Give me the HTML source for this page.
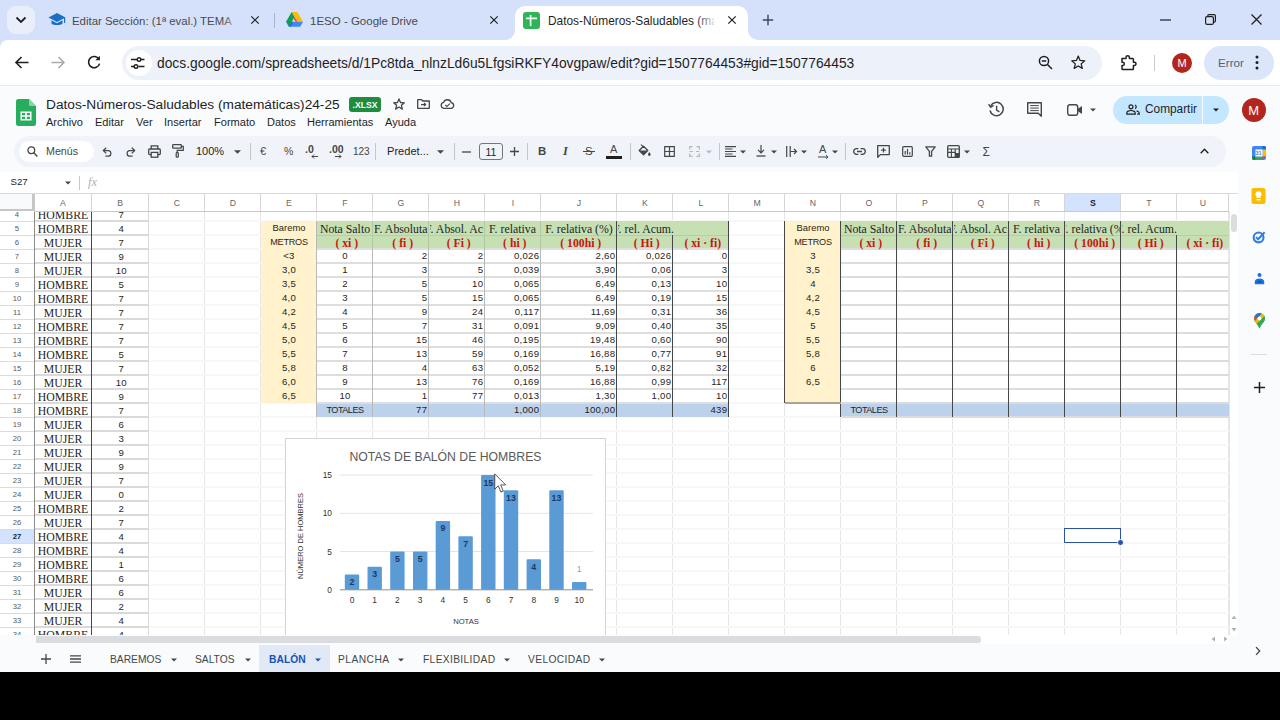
<!DOCTYPE html>
<html lang="es"><head><meta charset="utf-8"><title>Datos-Números-Saludables</title>
<style>
*{box-sizing:border-box;margin:0;padding:0}
html,body{width:1280px;height:720px;overflow:hidden;background:#000}
body{font-family:"Liberation Sans",sans-serif;position:relative;color:#1f1f1f}
.abs{position:absolute}
.t{position:absolute;white-space:nowrap;line-height:1}
svg{position:absolute;overflow:visible}
#tabstrip{left:0;top:0;width:1280px;height:52px;background:#d5e1fa}
#navbar{left:0;top:40px;width:1280px;height:46px;background:#fff;border-radius:8px 0 0 0}
#app{left:0;top:86px;width:1280px;height:586px;background:#f9fbfd}
.cell{position:absolute;white-space:nowrap;overflow:hidden;line-height:14px;height:14px}
.sans{font-family:"Liberation Sans",sans-serif}
.ser{font-family:"Liberation Serif",serif}
</style></head>
<body>
<div id="tabstrip" class="abs"></div>
<div class="abs" style="left:7px;top:6px;width:28px;height:28px;border-radius:9px;background:#e9eefb"></div>
<svg style="left:15px;top:16px" width="12" height="8" viewBox="0 0 12 8"><path d="M1.5 1.5 L6 6 L10.5 1.5" fill="none" stroke="#1f1f1f" stroke-width="1.8"/></svg>
<svg style="left:48px;top:12px" width="18" height="16" viewBox="0 0 18 16"><path d="M9 1 L0.5 5.5 L9 10 L17.5 5.5Z" fill="#1a6fc4"/><path d="M3.5 8.2 V11.6 C5 13.6 13 13.6 14.5 11.6 V8.2 L9 11.2Z" fill="#1a6fc4"/><path d="M16.6 6 V11" stroke="#1a6fc4" stroke-width="1.2"/></svg>
<div class="t" style="left:72px;top:16px;font-size:11.4px;color:#474a50;width:162px;overflow:hidden">Editar Sección: (1ª eval.) TEMA 5</div>
<div class="abs" style="left:222px;top:8px;width:18px;height:24px;background:linear-gradient(90deg,rgba(213,225,250,0),#d5e1fa)"></div>
<svg style="left:250px;top:15px" width="10" height="10" viewBox="0 0 10 10"><path d="M1.3 1.3 L8.7 8.7 M8.7 1.3 L1.3 8.7" stroke="#1f1f1f" stroke-width="1.2"/></svg>
<div class="abs" style="left:274px;top:13px;width:1px;height:15px;background:#a7b3cf"></div>
<svg style="left:286px;top:12px" width="17" height="15" viewBox="0 0 17 15"><path d="M5.7 0 H11.3 L17 9.8 H11.4Z" fill="#fbbc04"/><path d="M5.7 0 L0 9.8 L2.8 14.7 L8.5 4.9Z" fill="#0f9d58"/><path d="M5.6 9.8 H17 L14.2 14.7 H2.8Z" fill="#4285f4"/><path d="M5.6 9.8 L2.8 14.7 H4.5 L7.2 9.8Z" fill="#1967d2"/><path d="M11.4 9.8 L8.5 4.9 L7.6 6.4 L9.6 9.8Z" fill="#ea4335"/></svg>
<div class="t" style="left:310px;top:16px;font-size:11.5px;color:#474a50">1ESO - Google Drive</div>
<svg style="left:489px;top:15px" width="10" height="10" viewBox="0 0 10 10"><path d="M1.3 1.3 L8.7 8.7 M8.7 1.3 L1.3 8.7" stroke="#1f1f1f" stroke-width="1.2"/></svg>
<div class="abs" style="left:515px;top:6px;width:233px;height:34px;background:#fff;border-radius:10px 10px 0 0"></div>
<svg style="left:505px;top:30px" width="10" height="10" viewBox="0 0 10 10"><path d="M10 0 V10 H0 A10 10 0 0 0 10 0Z" fill="#fff"/></svg>
<svg style="left:748px;top:30px" width="10" height="10" viewBox="0 0 10 10"><path d="M0 0 V10 H10 A10 10 0 0 1 0 0Z" fill="#fff"/></svg>
<div class="abs" style="left:523px;top:12px;width:17px;height:17px;border-radius:3px;background:#2fb457"></div>
<svg style="left:526px;top:15px" width="11" height="11" viewBox="0 0 11 11"><path d="M4.6 0V11 M0 3.4H11" stroke="#fff" stroke-width="1.7" opacity="0.92"/></svg>
<div class="t" style="left:548px;top:16px;font-size:11.9px;color:#1f1f1f;width:166px;overflow:hidden">Datos-Números-Saludables (matem</div>
<div class="abs" style="left:696px;top:8px;width:22px;height:24px;background:linear-gradient(90deg,rgba(255,255,255,0),#fff)"></div>
<svg style="left:727px;top:15px" width="10" height="10" viewBox="0 0 10 10"><path d="M1.3 1.3 L8.7 8.7 M8.7 1.3 L1.3 8.7" stroke="#1f1f1f" stroke-width="1.2"/></svg>
<svg style="left:762px;top:14px" width="12" height="12" viewBox="0 0 12 12"><path d="M6 0.8V11.2 M0.8 6H11.2" stroke="#3c4657" stroke-width="1.4"/></svg>
<svg style="left:1160px;top:19px" width="11" height="2" viewBox="0 0 11 2"><path d="M0 1H11" stroke="#1f1f1f" stroke-width="1.2"/></svg>
<svg style="left:1205px;top:14px" width="11" height="11" viewBox="0 0 11 11"><rect x="0.6" y="2.6" width="7.8" height="7.8" rx="1.5" fill="none" stroke="#1f1f1f" stroke-width="1.2"/><path d="M2.8 2.4 V1.8 Q2.8 0.6 4 0.6 H9 Q10.4 0.6 10.4 2 V7 Q10.4 8.2 9.2 8.2 H8.6" fill="none" stroke="#1f1f1f" stroke-width="1.2"/></svg>
<svg style="left:1251px;top:14px" width="11" height="11" viewBox="0 0 11 11"><path d="M0.5 0.5 L10.5 10.5 M10.5 0.5 L0.5 10.5" stroke="#1f1f1f" stroke-width="1.3"/></svg>
<div id="navbar" class="abs"></div>
<div class="abs" style="left:0;top:85px;width:1280px;height:1px;background:#e6e9f0"></div>
<svg style="left:15px;top:56px" width="14" height="13" viewBox="0 0 14 13"><path d="M13.5 6.5 H1.5 M6.5 1 L1 6.5 L6.5 12" fill="none" stroke="#1f1f1f" stroke-width="1.6"/></svg>
<svg style="left:51px;top:56px" width="14" height="13" viewBox="0 0 14 13"><path d="M0.5 6.5 H12.5 M7.5 1 L13 6.5 L7.5 12" fill="none" stroke="#a9abae" stroke-width="1.6"/></svg>
<svg style="left:87px;top:55px" width="14" height="15" viewBox="0 0 14 15"><path d="M12 4.2 A5.6 5.6 0 1 0 12.6 8.6" fill="none" stroke="#1f1f1f" stroke-width="1.6"/><path d="M12.9 0.8 V5.3 H8.4Z" fill="#1f1f1f"/></svg>
<div class="abs" style="left:122px;top:46px;width:980px;height:34px;border-radius:17px;background:#edf1fa"></div>
<div class="abs" style="left:126px;top:50px;width:26px;height:26px;border-radius:13px;background:#fff"></div>
<svg style="left:131px;top:57px" width="15" height="12" viewBox="0 0 15 12"><path d="M0 2.5H6 M10 2.5H13.5 M0 9.5H3 M7.5 9.5H13.5" stroke="#1f1f1f" stroke-width="1.4"/><circle cx="8" cy="2.5" r="1.8" fill="none" stroke="#1f1f1f" stroke-width="1.4"/><circle cx="5" cy="9.5" r="1.8" fill="none" stroke="#1f1f1f" stroke-width="1.4"/></svg>
<div class="t" style="left:157px;top:56.5px;font-size:13.8px;color:#1f1f1f">docs.google.com/spreadsheets/d/1Pc8tda_nlnzLd6u5LfgsiRKFY4ovgpaw/edit?gid=1507764453#gid=1507764453</div>
<svg style="left:1038px;top:55px" width="15" height="15" viewBox="0 0 15 15"><circle cx="6" cy="6" r="4.6" fill="none" stroke="#1f1f1f" stroke-width="1.5"/><path d="M9.5 9.5 L14 14 M3.8 6 H8.2" stroke="#1f1f1f" stroke-width="1.5"/></svg>
<svg style="left:1071px;top:55px" width="14.5" height="14.5" viewBox="0 0 16 16"><path d="M8 1.2 L10 6 L15.2 6.4 L11.2 9.8 L12.5 14.8 L8 12.1 L3.5 14.8 L4.8 9.8 L0.8 6.4 L6 6Z" fill="none" stroke="#1f1f1f" stroke-width="1.4" stroke-linejoin="round"/></svg>
<svg style="left:1120px;top:54px" width="17" height="17" viewBox="0 0 17 17"><path d="M2 4.6 H6 V3.4 A1.7 1.7 0 0 1 9.4 3.4 V4.6 H12.6 A0.8 0.8 0 0 1 13.4 5.4 V8.2 H14.4 A1.6 1.6 0 0 1 14.4 11.4 H13.4 V14.8 A0.8 0.8 0 0 1 12.6 15.6 H2.8 A0.8 0.8 0 0 1 2 14.8 V11.6 H2.6 A1.7 1.7 0 0 0 2.6 8.2 H2Z" fill="none" stroke="#1f1f1f" stroke-width="1.5" stroke-linejoin="round"/></svg>
<div class="abs" style="left:1154px;top:55px;width:1px;height:16px;background:#c7cbd6"></div>
<div class="abs" style="left:1172px;top:53px;width:20px;height:20px;border-radius:10px;background:#b3261e"></div>
<div class="t" style="left:1172px;top:58px;width:20px;text-align:center;font-size:11px;color:#fff">M</div>
<div class="abs" style="left:1204px;top:46px;width:70px;height:34px;border-radius:17px;background:#dbe6fb"></div>
<div class="t" style="left:1218px;top:57px;font-size:11.7px;color:#55617a">Error</div>
<svg style="left:1255px;top:55px" width="4" height="15" viewBox="0 0 4 15"><circle cx="2" cy="2" r="1.5" fill="#1f1f1f"/><circle cx="2" cy="7.5" r="1.5" fill="#1f1f1f"/><circle cx="2" cy="13" r="1.5" fill="#1f1f1f"/></svg>
<div id="app" class="abs"></div>
<svg style="left:16px;top:99px" width="20" height="27" viewBox="0 0 20 27"><path d="M2.5 0 H13 L20 7 V24.5 A2.5 2.5 0 0 1 17.5 27 H2.5 A2.5 2.5 0 0 1 0 24.5 V2.5 A2.5 2.5 0 0 1 2.5 0Z" fill="#27ad5d"/><path d="M13 0 L20 7 H14.5 A1.5 1.5 0 0 1 13 5.5Z" fill="#8ed1b1"/><path d="M4.5 12.5H15.5V21.5H4.5Z M6 14V16.2H9.2V14Z M10.8 14V16.2H14V14Z M6 17.8V20H9.2V17.8Z M10.8 17.8V20H14V17.8Z" fill="#fff" fill-rule="evenodd"/></svg>
<div class="t" style="left:46px;top:98px;font-size:13.7px;color:#1f1f1f">Datos-Números-Saludables (matemáticas)24-25</div>
<div class="abs" style="left:349px;top:97px;width:32px;height:15px;border-radius:3px;background:#1e8e3e"></div>
<div class="t" style="left:349px;top:100.5px;width:32px;text-align:center;font-size:8.6px;font-weight:bold;color:#fff;letter-spacing:0">.XLSX</div>
<svg style="left:393px;top:98px" width="12" height="12" viewBox="0 0 16 16"><path d="M8 1.2 L10 6 L15.2 6.4 L11.2 9.8 L12.5 14.8 L8 12.1 L3.5 14.8 L4.8 9.8 L0.8 6.4 L6 6Z" fill="none" stroke="#444746" stroke-width="1.7" stroke-linejoin="round"/></svg>
<svg style="left:417px;top:99px" width="13" height="10" viewBox="0 0 13 10"><path d="M0.7 0.7 H4.6 L5.8 2 H12.3 V9.3 H0.7Z" fill="none" stroke="#444746" stroke-width="1.3" stroke-linejoin="round"/><path d="M4 5.6 H8.6 M7 4 L8.7 5.6 L7 7.2" fill="none" stroke="#444746" stroke-width="1.1"/></svg>
<svg style="left:440px;top:99px" width="15" height="10" viewBox="0 0 15 10"><path d="M3.8 9.3 A3 3 0 0 1 3.6 3.4 A4 4 0 0 1 11.2 3.6 A2.9 2.9 0 0 1 11.4 9.3Z" fill="none" stroke="#444746" stroke-width="1.3"/><path d="M5.3 6 L6.9 7.5 L9.8 4.6" fill="none" stroke="#444746" stroke-width="1.1"/></svg>
<div class="t" style="left:46px;top:116.5px;font-size:11.05px;color:#1f1f1f">Archivo</div>
<div class="t" style="left:95px;top:116.5px;font-size:11.05px;color:#1f1f1f">Editar</div>
<div class="t" style="left:136px;top:116.5px;font-size:11.05px;color:#1f1f1f">Ver</div>
<div class="t" style="left:164px;top:116.5px;font-size:11.05px;color:#1f1f1f">Insertar</div>
<div class="t" style="left:214px;top:116.5px;font-size:11.05px;color:#1f1f1f">Formato</div>
<div class="t" style="left:267px;top:116.5px;font-size:11.05px;color:#1f1f1f">Datos</div>
<div class="t" style="left:307px;top:116.5px;font-size:11.05px;color:#1f1f1f">Herramientas</div>
<div class="t" style="left:385px;top:116.5px;font-size:11.05px;color:#1f1f1f">Ayuda</div>
<svg style="left:988px;top:101px" width="17" height="17" viewBox="0 0 17 17"><path d="M2.6 5 A6.7 6.7 0 1 1 2 9.5" fill="none" stroke="#444746" stroke-width="1.5"/><path d="M0.6 3.2 L2.6 6.3 L5.6 4.4" fill="none" stroke="#444746" stroke-width="1.4"/><path d="M8.6 4.8 V9 L11.4 10.8" fill="none" stroke="#444746" stroke-width="1.4"/></svg>
<svg style="left:1027px;top:102px" width="15" height="15" viewBox="0 0 15 15"><path d="M0.7 0.7 H14.3 V14.3 L11.3 11.3 H0.7Z" fill="none" stroke="#444746" stroke-width="1.4" stroke-linejoin="round"/><path d="M3.2 3.6H11.8 M3.2 6.1H11.8 M3.2 8.6H11.8" stroke="#444746" stroke-width="1"/></svg>
<svg style="left:1067px;top:104px" width="16" height="12" viewBox="0 0 16 12"><rect x="0.7" y="0.7" width="10" height="10.6" rx="2.2" fill="none" stroke="#444746" stroke-width="1.4"/><path d="M10.7 5 L15 2 V10 L10.7 7Z" fill="#444746"/></svg>
<svg style="left:1090px;top:108px" width="6" height="4" viewBox="0 0 8 4"><path d="M0 0H8L4 4Z" fill="#444746"/></svg>
<div class="abs" style="left:1113px;top:95.5px;width:116px;height:28.5px;border-radius:14.5px;background:#c2e7ff"></div>
<div class="abs" style="left:1202px;top:95.5px;width:1px;height:28.5px;background:#f9fbfd"></div>
<svg style="left:1126px;top:104px" width="14" height="11" viewBox="0 0 14 11"><circle cx="5" cy="2.8" r="2" fill="none" stroke="#1f1f1f" stroke-width="1.2"/><path d="M0.8 10.2 V9 C0.8 7.4 3 6.5 5 6.5 S9.2 7.4 9.2 9 V10.2Z" fill="none" stroke="#1f1f1f" stroke-width="1.2"/><path d="M9 1 A2 2 0 0 1 9 4.7 M10.6 6.8 C12 7.2 13.2 7.9 13.2 9 V10.2 H11.2" fill="none" stroke="#1f1f1f" stroke-width="1.2"/></svg>
<div class="t" style="left:1145px;top:104px;font-size:11.85px;color:#1f1f1f">Compartir</div>
<svg style="left:1213px;top:108px" width="6" height="4" viewBox="0 0 8 4"><path d="M0 0H8L4 4Z" fill="#1f1f1f"/></svg>
<div class="abs" style="left:1241.5px;top:97.5px;width:24.5px;height:24.5px;border-radius:13px;background:#b3261e"></div>
<div class="t" style="left:1241.5px;top:103.5px;width:24.5px;text-align:center;font-size:13px;color:#fff">M</div>
<div class="abs" style="left:14px;top:136px;width:1212px;height:31px;border-radius:16px;background:#f0f3f9"></div>
<div class="abs" style="left:19px;top:141px;width:75px;height:21px;border-radius:11px;background:#fff"></div>
<svg style="left:27px;top:146px" width="11" height="11" viewBox="0 0 11 11"><circle cx="4.3" cy="4.3" r="3.4" fill="none" stroke="#444746" stroke-width="1.3"/><path d="M6.8 6.8 L10.4 10.4" stroke="#444746" stroke-width="1.4"/></svg>
<div class="t" style="left:46px;top:146px;font-size:10.7px;color:#444746">Menús</div>
<svg style="left:101.5px;top:146px" width="11" height="11" viewBox="0 0 11 11"><path d="M1.6 4.6 H7 A3 3 0 0 1 7 10.2 H3.4" fill="none" stroke="#444746" stroke-width="1.3"/><path d="M4.2 1.8 L1.4 4.6 L4.2 7.4" fill="none" stroke="#444746" stroke-width="1.3"/></svg>
<svg style="left:125px;top:146px" width="11" height="11" viewBox="0 0 11 11"><path d="M9.4 4.6 H4 A3 3 0 0 0 4 10.2 H7.6" fill="none" stroke="#444746" stroke-width="1.3"/><path d="M6.8 1.8 L9.6 4.6 L6.8 7.4" fill="none" stroke="#444746" stroke-width="1.3"/></svg>
<svg style="left:148px;top:145px" width="13" height="13" viewBox="0 0 13 13"><path d="M3.2 4 V0.8 H9.8 V4" fill="none" stroke="#444746" stroke-width="1.3"/><path d="M3.2 9.6 H1.6 A1 1 0 0 1 0.7 8.6 V5 A1 1 0 0 1 1.6 4 H11.4 A1 1 0 0 1 12.3 5 V8.6 A1 1 0 0 1 11.4 9.6 H9.8" fill="none" stroke="#444746" stroke-width="1.3"/><rect x="3.2" y="7.4" width="6.6" height="4.8" fill="none" stroke="#444746" stroke-width="1.3"/></svg>
<svg style="left:172px;top:144px" width="12" height="14" viewBox="0 0 12 14"><rect x="0.7" y="0.7" width="8.6" height="3.4" rx="0.6" fill="none" stroke="#444746" stroke-width="1.3"/><path d="M9.3 2.4 H11.3 V6.4 H5.2 V8.6" fill="none" stroke="#444746" stroke-width="1.2"/><rect x="4.2" y="8.6" width="2.1" height="4.6" rx="0.6" fill="none" stroke="#444746" stroke-width="1.2"/></svg>
<div class="t" style="left:196px;top:146px;font-size:11px;color:#1f1f1f">100%</div>
<svg style="left:234px;top:150px" width="7" height="4" viewBox="0 0 8 4"><path d="M0 0H8L4 4Z" fill="#444746"/></svg>
<div class="abs" style="left:250px;top:143px;width:1px;height:17px;background:#c7c7c7"></div>
<div class="t" style="left:260px;top:146px;font-size:11px;color:#444746">€</div>
<div class="t" style="left:284px;top:146px;font-size:10.5px;color:#444746">%</div>
<div class="t" style="left:305px;top:144px;font-size:10.5px;color:#444746;font-weight:bold">.0</div>
<svg style="left:311px;top:154px" width="7" height="5" viewBox="0 0 7 5"><path d="M7 2.5 H1 M3 0.5 L1 2.5 L3 4.5" fill="none" stroke="#444746" stroke-width="1"/></svg>
<div class="t" style="left:329px;top:144px;font-size:10.5px;color:#444746;font-weight:bold">.00</div>
<svg style="left:335px;top:154px" width="7" height="5" viewBox="0 0 7 5"><path d="M0 2.5 H6 M4 0.5 L6 2.5 L4 4.5" fill="none" stroke="#444746" stroke-width="1"/></svg>
<div class="t" style="left:353px;top:147px;font-size:10px;color:#444746">123</div>
<div class="abs" style="left:375px;top:143px;width:1px;height:17px;background:#c7c7c7"></div>
<div class="t" style="left:387px;top:146px;font-size:11.1px;color:#1f1f1f">Predet...</div>
<svg style="left:437px;top:150px" width="7" height="4" viewBox="0 0 8 4"><path d="M0 0H8L4 4Z" fill="#444746"/></svg>
<div class="abs" style="left:454px;top:143px;width:1px;height:17px;background:#c7c7c7"></div>
<svg style="left:462px;top:151px" width="9" height="2" viewBox="0 0 9 2"><path d="M0 1H9" stroke="#444746" stroke-width="1.3"/></svg>
<div class="abs" style="left:479px;top:143px;width:24px;height:17px;border:1px solid #747775;border-radius:3px;background:#f0f3f9"></div>
<div class="t" style="left:479px;top:147px;width:24px;text-align:center;font-size:10.5px;color:#1f1f1f">11</div>
<svg style="left:510px;top:147px" width="9" height="9" viewBox="0 0 9 9"><path d="M0 4.5H9 M4.5 0V9" stroke="#444746" stroke-width="1.3"/></svg>
<div class="abs" style="left:527px;top:143px;width:1px;height:17px;background:#c7c7c7"></div>
<div class="t" style="left:538px;top:146px;font-size:11.4px;font-weight:bold;color:#444746">B</div>
<div class="t ser" style="left:563px;top:145px;font-size:12.5px;font-style:italic;font-weight:bold;color:#444746">I</div>
<div class="t" style="left:585px;top:146px;font-size:11.4px;color:#444746">S</div>
<div class="abs" style="left:583px;top:151px;width:12px;height:1.3px;background:#444746"></div>
<div class="t" style="left:610px;top:144px;font-size:11px;color:#444746">A</div>
<div class="abs" style="left:606px;top:156px;width:16px;height:2.5px;background:#1f1f1f"></div>
<div class="abs" style="left:630px;top:143px;width:1px;height:17px;background:#c7c7c7"></div>
<svg style="left:638px;top:144px" width="13" height="13" viewBox="0 0 13 13"><path d="M1.2 6.5 L5.5 2.2 L9.8 6.5 L5.5 10.8Z" fill="none" stroke="#444746" stroke-width="1.3" stroke-linejoin="round"/><path d="M1.6 6.6 H9.4 L5.5 10.4Z" fill="#444746"/><path d="M3 0.6 L5.6 3.2" stroke="#444746" stroke-width="1.2"/><path d="M11.3 8 C12.3 9.4 12.6 10 12.6 10.6 A1.3 1.3 0 0 1 10 10.6 C10 10 10.3 9.4 11.3 8Z" fill="#444746"/></svg>
<svg style="left:664px;top:146px" width="11" height="11" viewBox="0 0 11 11"><path d="M0.7 0.7H10.3V10.3H0.7Z M5.5 0.7V10.3 M0.7 5.5H10.3" fill="none" stroke="#444746" stroke-width="1.2"/></svg>
<svg style="left:689px;top:146px" width="11" height="11" viewBox="0 0 11 11"><path d="M3.5 0.7H0.7V3.5 M7.5 0.7H10.3V3.5 M3.5 10.3H0.7V7.5 M7.5 10.3H10.3V7.5" fill="none" stroke="#b4b7bb" stroke-width="1.2"/><path d="M0.7 5.5H4 M7 5.5H10.3" stroke="#b4b7bb" stroke-width="1.2"/></svg>
<svg style="left:706px;top:150px" width="6" height="4" viewBox="0 0 8 4"><path d="M0 0H8L4 4Z" fill="#b4b7bb"/></svg>
<div class="abs" style="left:718.5px;top:143px;width:1px;height:17px;background:#c7c7c7"></div>
<svg style="left:725px;top:146px" width="11" height="11" viewBox="0 0 11 11"><path d="M0 0.6H11 M0 3.05H7.5 M0 5.5H11 M0 7.95H7.5 M0 10.4H11" stroke="#444746" stroke-width="1.1"/></svg>
<svg style="left:740px;top:150px" width="6" height="4" viewBox="0 0 8 4"><path d="M0 0H8L4 4Z" fill="#444746"/></svg>
<svg style="left:756px;top:145px" width="10" height="12" viewBox="0 0 10 12"><path d="M5 0 V7.5 M2 4.8 L5 7.8 L8 4.8" fill="none" stroke="#444746" stroke-width="1.2"/><path d="M0.5 11H9.5" stroke="#444746" stroke-width="1.3"/></svg>
<svg style="left:771px;top:150px" width="6" height="4" viewBox="0 0 8 4"><path d="M0 0H8L4 4Z" fill="#444746"/></svg>
<svg style="left:786px;top:146px" width="11" height="11" viewBox="0 0 11 11"><path d="M0.7 0V11 M4.2 0V11" stroke="#444746" stroke-width="1.2"/><path d="M4.2 5.5H10.5 M8 3 L10.5 5.5 L8 8" fill="none" stroke="#444746" stroke-width="1.2"/></svg>
<svg style="left:801px;top:150px" width="6" height="4" viewBox="0 0 8 4"><path d="M0 0H8L4 4Z" fill="#444746"/></svg>
<div class="t" style="left:819px;top:144px;font-size:11px;color:#444746">A</div>
<svg style="left:818px;top:155px" width="11" height="4" viewBox="0 0 11 4"><path d="M0 2H10 M8 0.3 L10 2 L8 3.7" fill="none" stroke="#444746" stroke-width="1"/></svg>
<svg style="left:832px;top:150px" width="6" height="4" viewBox="0 0 8 4"><path d="M0 0H8L4 4Z" fill="#444746"/></svg>
<div class="abs" style="left:845px;top:143px;width:1px;height:17px;background:#c7c7c7"></div>
<svg style="left:853px;top:148px" width="13" height="7" viewBox="0 0 13 7"><path d="M5.4 0.7H3.5A2.8 2.8 0 0 0 3.5 6.3H5.4 M7.6 0.7H9.5A2.8 2.8 0 0 1 9.5 6.3H7.6 M4 3.5H9" fill="none" stroke="#444746" stroke-width="1.3"/></svg>
<svg style="left:877px;top:145px" width="13" height="13" viewBox="0 0 13 13"><path d="M0.7 0.7H12.3V9.6H3.4L0.7 12.3Z" fill="none" stroke="#444746" stroke-width="1.3" stroke-linejoin="round"/><path d="M6.5 2.8V7.6 M4.1 5.2H8.9" stroke="#444746" stroke-width="1.2"/></svg>
<svg style="left:902px;top:146px" width="11" height="11" viewBox="0 0 11 11"><rect x="0.7" y="0.7" width="9.6" height="9.6" rx="1" fill="none" stroke="#444746" stroke-width="1.2"/><path d="M3.2 8.4V5 M5.5 8.4V3 M7.8 8.4V6.2" stroke="#444746" stroke-width="1.2"/></svg>
<svg style="left:925px;top:146px" width="11" height="11" viewBox="0 0 11 11"><path d="M0.8 0.8H10.2L6.6 5.4V10.2H4.4V5.4Z" fill="none" stroke="#444746" stroke-width="1.3" stroke-linejoin="round"/></svg>
<svg style="left:947px;top:145px" width="13" height="13" viewBox="0 0 13 13"><rect x="0.7" y="0.7" width="11.6" height="11.6" rx="1" fill="none" stroke="#444746" stroke-width="1.3"/><path d="M0.7 4H12.3 M0.7 7.4H9 M4.4 4V12.3 M8.2 4V12.3" stroke="#444746" stroke-width="1.1"/><rect x="8" y="8" width="4.6" height="4.6" fill="#444746"/></svg>
<svg style="left:964px;top:150px" width="6" height="4" viewBox="0 0 8 4"><path d="M0 0H8L4 4Z" fill="#444746"/></svg>
<div class="t" style="left:982.5px;top:145.5px;font-size:12px;color:#444746">Σ</div>
<svg style="left:1200px;top:148px" width="9" height="6" viewBox="0 0 9 6"><path d="M0.7 5.2 L4.5 1.2 L8.3 5.2" fill="none" stroke="#1f1f1f" stroke-width="1.3"/></svg>
<div class="abs" style="left:0;top:172px;width:1238px;height:21px;background:#fff"></div>
<div class="t" style="left:10.5px;top:176.5px;font-size:9.7px;color:#1f1f1f">S27</div>
<svg style="left:64.5px;top:180.5px" width="6" height="4" viewBox="0 0 8 4"><path d="M0 0H8L4 4Z" fill="#444746"/></svg>
<div class="abs" style="left:79px;top:176px;width:1px;height:14px;background:#c7c7c7"></div>
<div class="t ser" style="left:88px;top:176px;font-size:12.5px;font-style:italic;color:#aeb2b7">fx</div>
<div class="abs" style="left:1238px;top:130px;width:42px;height:542px;background:#f9fbfd"></div>
<svg style="left:1252px;top:146px" width="14" height="14" viewBox="0 0 14 14"><rect x="0" y="0" width="14" height="14" rx="2" fill="#4285f4"/><path d="M0 10.5H3.5V14H2A2 2 0 0 1 0 12Z" fill="#188038"/><path d="M10.5 0H12A2 2 0 0 1 14 2V3.5H10.5Z" fill="#1967d2"/><rect x="10.5" y="3.5" width="3.5" height="7" fill="#fbbc04"/><rect x="3.5" y="10.5" width="7" height="3.5" fill="#34a853"/><path d="M10.5 10.5H14L10.5 14Z" fill="#ea4335"/><rect x="3.5" y="3.5" width="7" height="7" fill="#fff"/></svg>
<div class="t" style="left:1255.5px;top:151px;font-size:5.5px;font-weight:bold;color:#4285f4">31</div>
<svg style="left:1251px;top:187.5px" width="15" height="16" viewBox="0 0 14 16"><rect x="0" y="0" width="14" height="16" rx="2" fill="#fbbc04"/><path d="M7 3.2A3 3 0 0 0 5 8.5V10H9V8.5A3 3 0 0 0 7 3.2Z" fill="#fff"/><rect x="5" y="11" width="4" height="1.3" fill="#fff"/></svg>
<svg style="left:1252px;top:230px" width="14" height="14" viewBox="0 0 16 16"><circle cx="7.5" cy="8.5" r="5.6" fill="none" stroke="#2f7de9" stroke-width="2.4"/><path d="M4.6 8.2 L7 10.6 L14.4 2.6" fill="none" stroke="#2f7de9" stroke-width="2.2"/></svg>
<svg style="left:1253.5px;top:272px" width="11" height="13.5" viewBox="0 0 14 16"><circle cx="7" cy="3.2" r="2.6" fill="#1a73e8"/><path d="M1 15V11.5C1 9 4 7.6 7 7.6S13 9 13 11.5V15Z" fill="#1a73e8"/><rect x="4.4" y="10.6" width="5.2" height="2.2" fill="#174ea6"/></svg>
<svg style="left:1253.5px;top:313px" width="11" height="15.5" viewBox="0 0 12 17"><path d="M6 0A6 6 0 0 0 0 6C0 10 4.5 12.5 6 17C7.5 12.5 12 10 12 6A6 6 0 0 0 6 0Z" fill="#34a853"/><path d="M6 0A6 6 0 0 0 0.9 2.9L4.2 5.6L8.6 0.6A6 6 0 0 0 6 0Z" fill="#1a73e8"/><path d="M0.9 2.9A6 6 0 0 0 0.8 8.8L4.2 5.6Z" fill="#ea4335"/><path d="M8.6 0.6L11.5 3.6L3 11.7C2 10.6 1.2 9.7 0.8 8.8Z" fill="#fbbc04" opacity="0.95"/><path d="M11.5 3.6A6 6 0 0 1 10.4 10C9 11.8 7 13.8 6 17C5.3 15 4.2 13.4 3 11.7Z" fill="#34a853"/><circle cx="6" cy="6" r="2.1" fill="#fff"/></svg>
<div class="abs" style="left:1251px;top:354px;width:16px;height:1px;background:#dadce0"></div>
<svg style="left:1254px;top:382px" width="11" height="11" viewBox="0 0 11 11"><path d="M0 5.5H11 M5.5 0V11" stroke="#1f1f1f" stroke-width="1.5"/></svg>
<svg style="left:1255px;top:646px" width="6" height="10" viewBox="0 0 6 10"><path d="M1 1.2 L4.8 5 L1 8.8" fill="none" stroke="#3a3d40" stroke-width="1.2"/></svg>
<div class="abs" style="left:0px;top:193px;width:1238px;height:442px;background:#fff"></div>
<div class="abs" style="left:34px;top:211px;width:1px;height:424px;background:#e6e6e6"></div>
<div class="abs" style="left:91px;top:211px;width:1px;height:424px;background:#e6e6e6"></div>
<div class="abs" style="left:148px;top:211px;width:1px;height:424px;background:#e6e6e6"></div>
<div class="abs" style="left:204px;top:211px;width:1px;height:424px;background:#e6e6e6"></div>
<div class="abs" style="left:260px;top:211px;width:1px;height:424px;background:#e6e6e6"></div>
<div class="abs" style="left:316px;top:211px;width:1px;height:424px;background:#e6e6e6"></div>
<div class="abs" style="left:372px;top:211px;width:1px;height:424px;background:#e6e6e6"></div>
<div class="abs" style="left:428px;top:211px;width:1px;height:424px;background:#e6e6e6"></div>
<div class="abs" style="left:484px;top:211px;width:1px;height:424px;background:#e6e6e6"></div>
<div class="abs" style="left:540px;top:211px;width:1px;height:424px;background:#e6e6e6"></div>
<div class="abs" style="left:616px;top:211px;width:1px;height:424px;background:#e6e6e6"></div>
<div class="abs" style="left:672px;top:211px;width:1px;height:424px;background:#e6e6e6"></div>
<div class="abs" style="left:728px;top:211px;width:1px;height:424px;background:#e6e6e6"></div>
<div class="abs" style="left:784px;top:211px;width:1px;height:424px;background:#e6e6e6"></div>
<div class="abs" style="left:840px;top:211px;width:1px;height:424px;background:#e6e6e6"></div>
<div class="abs" style="left:896px;top:211px;width:1px;height:424px;background:#e6e6e6"></div>
<div class="abs" style="left:952px;top:211px;width:1px;height:424px;background:#e6e6e6"></div>
<div class="abs" style="left:1008px;top:211px;width:1px;height:424px;background:#e6e6e6"></div>
<div class="abs" style="left:1064px;top:211px;width:1px;height:424px;background:#e6e6e6"></div>
<div class="abs" style="left:1120px;top:211px;width:1px;height:424px;background:#e6e6e6"></div>
<div class="abs" style="left:1176px;top:211px;width:1px;height:424px;background:#e6e6e6"></div>
<div class="abs" style="left:1228px;top:211px;width:1px;height:424px;background:#e6e6e6"></div>
<div class="abs" style="left:34px;top:220.0px;width:1195px;height:2px;background:#f7f7f7"></div>
<div class="abs" style="left:34px;top:234.0px;width:1195px;height:2px;background:#f7f7f7"></div>
<div class="abs" style="left:34px;top:248.0px;width:1195px;height:2px;background:#f7f7f7"></div>
<div class="abs" style="left:34px;top:262.0px;width:1195px;height:2px;background:#f7f7f7"></div>
<div class="abs" style="left:34px;top:276.0px;width:1195px;height:2px;background:#f7f7f7"></div>
<div class="abs" style="left:34px;top:290.0px;width:1195px;height:2px;background:#f7f7f7"></div>
<div class="abs" style="left:34px;top:304.0px;width:1195px;height:2px;background:#f7f7f7"></div>
<div class="abs" style="left:34px;top:318.0px;width:1195px;height:2px;background:#f7f7f7"></div>
<div class="abs" style="left:34px;top:332.0px;width:1195px;height:2px;background:#f7f7f7"></div>
<div class="abs" style="left:34px;top:346.0px;width:1195px;height:2px;background:#f7f7f7"></div>
<div class="abs" style="left:34px;top:360.0px;width:1195px;height:2px;background:#f7f7f7"></div>
<div class="abs" style="left:34px;top:374.0px;width:1195px;height:2px;background:#f7f7f7"></div>
<div class="abs" style="left:34px;top:388.0px;width:1195px;height:2px;background:#f7f7f7"></div>
<div class="abs" style="left:34px;top:402.0px;width:1195px;height:2px;background:#f7f7f7"></div>
<div class="abs" style="left:34px;top:416.0px;width:1195px;height:2px;background:#f7f7f7"></div>
<div class="abs" style="left:34px;top:430.0px;width:1195px;height:2px;background:#f7f7f7"></div>
<div class="abs" style="left:34px;top:444.0px;width:1195px;height:2px;background:#f7f7f7"></div>
<div class="abs" style="left:34px;top:458.0px;width:1195px;height:2px;background:#f7f7f7"></div>
<div class="abs" style="left:34px;top:472.0px;width:1195px;height:2px;background:#f7f7f7"></div>
<div class="abs" style="left:34px;top:486.0px;width:1195px;height:2px;background:#f7f7f7"></div>
<div class="abs" style="left:34px;top:500.0px;width:1195px;height:2px;background:#f7f7f7"></div>
<div class="abs" style="left:34px;top:514.0px;width:1195px;height:2px;background:#f7f7f7"></div>
<div class="abs" style="left:34px;top:528.0px;width:1195px;height:2px;background:#f7f7f7"></div>
<div class="abs" style="left:34px;top:542.0px;width:1195px;height:2px;background:#f7f7f7"></div>
<div class="abs" style="left:34px;top:556.0px;width:1195px;height:2px;background:#f7f7f7"></div>
<div class="abs" style="left:34px;top:570.0px;width:1195px;height:2px;background:#f7f7f7"></div>
<div class="abs" style="left:34px;top:584.0px;width:1195px;height:2px;background:#f7f7f7"></div>
<div class="abs" style="left:34px;top:598.0px;width:1195px;height:2px;background:#f7f7f7"></div>
<div class="abs" style="left:34px;top:612.0px;width:1195px;height:2px;background:#f7f7f7"></div>
<div class="abs" style="left:34px;top:626.0px;width:1195px;height:2px;background:#f7f7f7"></div>
<div class="abs" style="left:261px;top:221px;width:56px;height:182px;background:#fff2cc"></div>
<div class="abs" style="left:785px;top:221px;width:56px;height:182px;background:#fff2cc"></div>
<div class="abs" style="left:317px;top:221px;width:412px;height:28px;background:#c6e0b4"></div>
<div class="abs" style="left:841px;top:221px;width:388px;height:28px;background:#c6e0b4"></div>
<div class="abs" style="left:317px;top:403px;width:412px;height:14px;background:#bbd1ec"></div>
<div class="abs" style="left:841px;top:403px;width:388px;height:14px;background:#bbd1ec"></div>
<div class="abs" style="left:34.5px;top:220.0px;width:114.5px;height:2px;background:#dadada"></div>
<div class="abs" style="left:34.5px;top:234.0px;width:114.5px;height:2px;background:#dadada"></div>
<div class="abs" style="left:34.5px;top:248.0px;width:114.5px;height:2px;background:#dadada"></div>
<div class="abs" style="left:34.5px;top:262.0px;width:114.5px;height:2px;background:#dadada"></div>
<div class="abs" style="left:34.5px;top:276.0px;width:114.5px;height:2px;background:#dadada"></div>
<div class="abs" style="left:34.5px;top:290.0px;width:114.5px;height:2px;background:#dadada"></div>
<div class="abs" style="left:34.5px;top:304.0px;width:114.5px;height:2px;background:#dadada"></div>
<div class="abs" style="left:34.5px;top:318.0px;width:114.5px;height:2px;background:#dadada"></div>
<div class="abs" style="left:34.5px;top:332.0px;width:114.5px;height:2px;background:#dadada"></div>
<div class="abs" style="left:34.5px;top:346.0px;width:114.5px;height:2px;background:#dadada"></div>
<div class="abs" style="left:34.5px;top:360.0px;width:114.5px;height:2px;background:#dadada"></div>
<div class="abs" style="left:34.5px;top:374.0px;width:114.5px;height:2px;background:#dadada"></div>
<div class="abs" style="left:34.5px;top:388.0px;width:114.5px;height:2px;background:#dadada"></div>
<div class="abs" style="left:34.5px;top:402.0px;width:114.5px;height:2px;background:#dadada"></div>
<div class="abs" style="left:34.5px;top:416.0px;width:114.5px;height:2px;background:#dadada"></div>
<div class="abs" style="left:34.5px;top:430.0px;width:114.5px;height:2px;background:#dadada"></div>
<div class="abs" style="left:34.5px;top:444.0px;width:114.5px;height:2px;background:#dadada"></div>
<div class="abs" style="left:34.5px;top:458.0px;width:114.5px;height:2px;background:#dadada"></div>
<div class="abs" style="left:34.5px;top:472.0px;width:114.5px;height:2px;background:#dadada"></div>
<div class="abs" style="left:34.5px;top:486.0px;width:114.5px;height:2px;background:#dadada"></div>
<div class="abs" style="left:34.5px;top:500.0px;width:114.5px;height:2px;background:#dadada"></div>
<div class="abs" style="left:34.5px;top:514.0px;width:114.5px;height:2px;background:#dadada"></div>
<div class="abs" style="left:34.5px;top:528.0px;width:114.5px;height:2px;background:#dadada"></div>
<div class="abs" style="left:34.5px;top:542.0px;width:114.5px;height:2px;background:#dadada"></div>
<div class="abs" style="left:34.5px;top:556.0px;width:114.5px;height:2px;background:#dadada"></div>
<div class="abs" style="left:34.5px;top:570.0px;width:114.5px;height:2px;background:#dadada"></div>
<div class="abs" style="left:34.5px;top:584.0px;width:114.5px;height:2px;background:#dadada"></div>
<div class="abs" style="left:34.5px;top:598.0px;width:114.5px;height:2px;background:#dadada"></div>
<div class="abs" style="left:34.5px;top:612.0px;width:114.5px;height:2px;background:#dadada"></div>
<div class="abs" style="left:34.5px;top:626.0px;width:114.5px;height:2px;background:#dadada"></div>
<div class="abs" style="left:147.8px;top:211px;width:1.4px;height:424px;background:#dadada"></div>
<div class="abs" style="left:34px;top:211px;width:1px;height:424px;background:#8a8a8a"></div>
<div class="abs" style="left:91px;top:211px;width:1px;height:424px;background:#474747"></div>
<div class="abs" style="left:317px;top:248.0px;width:412px;height:2px;background:#dedede"></div>
<div class="abs" style="left:317px;top:262.0px;width:412px;height:2px;background:#dedede"></div>
<div class="abs" style="left:317px;top:276.0px;width:412px;height:2px;background:#dedede"></div>
<div class="abs" style="left:317px;top:290.0px;width:412px;height:2px;background:#dedede"></div>
<div class="abs" style="left:317px;top:304.0px;width:412px;height:2px;background:#dedede"></div>
<div class="abs" style="left:317px;top:318.0px;width:412px;height:2px;background:#dedede"></div>
<div class="abs" style="left:317px;top:332.0px;width:412px;height:2px;background:#dedede"></div>
<div class="abs" style="left:317px;top:346.0px;width:412px;height:2px;background:#dedede"></div>
<div class="abs" style="left:317px;top:360.0px;width:412px;height:2px;background:#dedede"></div>
<div class="abs" style="left:317px;top:374.0px;width:412px;height:2px;background:#dedede"></div>
<div class="abs" style="left:317px;top:388.0px;width:412px;height:2px;background:#dedede"></div>
<div class="abs" style="left:317px;top:402.0px;width:412px;height:2px;background:#dedede"></div>
<div class="abs" style="left:317px;top:234.5px;width:412px;height:1px;background:#b5cfa3"></div>
<div class="abs" style="left:371.9px;top:249px;width:1.2px;height:168px;background:#b8b8b8"></div>
<div class="abs" style="left:372px;top:221px;width:1px;height:28px;background:#b3c9a6"></div>
<div class="abs" style="left:427.9px;top:249px;width:1.2px;height:168px;background:#b8b8b8"></div>
<div class="abs" style="left:428px;top:221px;width:1px;height:28px;background:#b3c9a6"></div>
<div class="abs" style="left:483.9px;top:249px;width:1.2px;height:168px;background:#b8b8b8"></div>
<div class="abs" style="left:484px;top:221px;width:1px;height:28px;background:#b3c9a6"></div>
<div class="abs" style="left:539.9px;top:249px;width:1.2px;height:168px;background:#b8b8b8"></div>
<div class="abs" style="left:540px;top:221px;width:1px;height:28px;background:#b3c9a6"></div>
<div class="abs" style="left:316px;top:221px;width:1px;height:196px;background:#b9b9b9"></div>
<div class="abs" style="left:616px;top:221px;width:1px;height:196px;background:#474747"></div>
<div class="abs" style="left:672px;top:235px;width:1px;height:182px;background:#474747"></div>
<div class="abs" style="left:728px;top:221px;width:1px;height:196px;background:#474747"></div>
<div class="abs" style="left:841px;top:248.0px;width:388px;height:2px;background:#dcdcdc"></div>
<div class="abs" style="left:841px;top:262.0px;width:388px;height:2px;background:#dcdcdc"></div>
<div class="abs" style="left:841px;top:276.0px;width:388px;height:2px;background:#dcdcdc"></div>
<div class="abs" style="left:841px;top:290.0px;width:388px;height:2px;background:#dcdcdc"></div>
<div class="abs" style="left:841px;top:304.0px;width:388px;height:2px;background:#dcdcdc"></div>
<div class="abs" style="left:841px;top:318.0px;width:388px;height:2px;background:#dcdcdc"></div>
<div class="abs" style="left:841px;top:332.0px;width:388px;height:2px;background:#dcdcdc"></div>
<div class="abs" style="left:841px;top:346.0px;width:388px;height:2px;background:#dcdcdc"></div>
<div class="abs" style="left:841px;top:360.0px;width:388px;height:2px;background:#dcdcdc"></div>
<div class="abs" style="left:841px;top:374.0px;width:388px;height:2px;background:#dcdcdc"></div>
<div class="abs" style="left:841px;top:388.0px;width:388px;height:2px;background:#dcdcdc"></div>
<div class="abs" style="left:841px;top:402.0px;width:388px;height:2px;background:#dcdcdc"></div>
<div class="abs" style="left:841px;top:234.5px;width:388px;height:1px;background:#b5cfa3"></div>
<div class="abs" style="left:841px;top:416.0px;width:388px;height:2px;background:#dcdcdc"></div>
<div class="abs" style="left:784px;top:221px;width:1px;height:182px;background:#474747"></div>
<div class="abs" style="left:840px;top:221px;width:1px;height:196px;background:#474747"></div>
<div class="abs" style="left:896px;top:221px;width:1px;height:196px;background:#474747"></div>
<div class="abs" style="left:952px;top:221px;width:1px;height:196px;background:#474747"></div>
<div class="abs" style="left:1008px;top:221px;width:1px;height:196px;background:#474747"></div>
<div class="abs" style="left:1064px;top:221px;width:1px;height:196px;background:#474747"></div>
<div class="abs" style="left:1120px;top:221px;width:1px;height:196px;background:#474747"></div>
<div class="abs" style="left:1176px;top:235px;width:1px;height:182px;background:#474747"></div>
<div class="abs" style="left:785px;top:402.3px;width:56px;height:1.4px;background:#a9a592"></div>
<div class="cell ser" style="left:35.5px;top:207.5px;width:55.0px;text-align:center;font-size:11.8px;color:#1f1f1f;padding:0 0px;">HOMBRE</div>
<div class="cell sans" style="left:92.5px;top:207.5px;width:55.5px;text-align:center;font-size:9.6px;color:#1f1f1f;padding:0 2px;padding-left:4px;letter-spacing:0.25px;">7</div>
<div class="cell ser" style="left:35.5px;top:221.5px;width:55.0px;text-align:center;font-size:11.8px;color:#1f1f1f;padding:0 0px;">HOMBRE</div>
<div class="cell sans" style="left:92.5px;top:221.5px;width:55.5px;text-align:center;font-size:9.6px;color:#1f1f1f;padding:0 2px;padding-left:4px;letter-spacing:0.25px;">4</div>
<div class="cell ser" style="left:35.5px;top:235.5px;width:55.0px;text-align:center;font-size:11.8px;color:#1f1f1f;padding:0 0px;">MUJER</div>
<div class="cell sans" style="left:92.5px;top:235.5px;width:55.5px;text-align:center;font-size:9.6px;color:#1f1f1f;padding:0 2px;padding-left:4px;letter-spacing:0.25px;">7</div>
<div class="cell ser" style="left:35.5px;top:249.5px;width:55.0px;text-align:center;font-size:11.8px;color:#1f1f1f;padding:0 0px;">MUJER</div>
<div class="cell sans" style="left:92.5px;top:249.5px;width:55.5px;text-align:center;font-size:9.6px;color:#1f1f1f;padding:0 2px;padding-left:4px;letter-spacing:0.25px;">9</div>
<div class="cell ser" style="left:35.5px;top:263.5px;width:55.0px;text-align:center;font-size:11.8px;color:#1f1f1f;padding:0 0px;">MUJER</div>
<div class="cell sans" style="left:92.5px;top:263.5px;width:55.5px;text-align:center;font-size:9.6px;color:#1f1f1f;padding:0 2px;padding-left:4px;letter-spacing:0.25px;">10</div>
<div class="cell ser" style="left:35.5px;top:277.5px;width:55.0px;text-align:center;font-size:11.8px;color:#1f1f1f;padding:0 0px;">HOMBRE</div>
<div class="cell sans" style="left:92.5px;top:277.5px;width:55.5px;text-align:center;font-size:9.6px;color:#1f1f1f;padding:0 2px;padding-left:4px;letter-spacing:0.25px;">5</div>
<div class="cell ser" style="left:35.5px;top:291.5px;width:55.0px;text-align:center;font-size:11.8px;color:#1f1f1f;padding:0 0px;">HOMBRE</div>
<div class="cell sans" style="left:92.5px;top:291.5px;width:55.5px;text-align:center;font-size:9.6px;color:#1f1f1f;padding:0 2px;padding-left:4px;letter-spacing:0.25px;">7</div>
<div class="cell ser" style="left:35.5px;top:305.5px;width:55.0px;text-align:center;font-size:11.8px;color:#1f1f1f;padding:0 0px;">MUJER</div>
<div class="cell sans" style="left:92.5px;top:305.5px;width:55.5px;text-align:center;font-size:9.6px;color:#1f1f1f;padding:0 2px;padding-left:4px;letter-spacing:0.25px;">7</div>
<div class="cell ser" style="left:35.5px;top:319.5px;width:55.0px;text-align:center;font-size:11.8px;color:#1f1f1f;padding:0 0px;">HOMBRE</div>
<div class="cell sans" style="left:92.5px;top:319.5px;width:55.5px;text-align:center;font-size:9.6px;color:#1f1f1f;padding:0 2px;padding-left:4px;letter-spacing:0.25px;">7</div>
<div class="cell ser" style="left:35.5px;top:333.5px;width:55.0px;text-align:center;font-size:11.8px;color:#1f1f1f;padding:0 0px;">HOMBRE</div>
<div class="cell sans" style="left:92.5px;top:333.5px;width:55.5px;text-align:center;font-size:9.6px;color:#1f1f1f;padding:0 2px;padding-left:4px;letter-spacing:0.25px;">7</div>
<div class="cell ser" style="left:35.5px;top:347.5px;width:55.0px;text-align:center;font-size:11.8px;color:#1f1f1f;padding:0 0px;">HOMBRE</div>
<div class="cell sans" style="left:92.5px;top:347.5px;width:55.5px;text-align:center;font-size:9.6px;color:#1f1f1f;padding:0 2px;padding-left:4px;letter-spacing:0.25px;">5</div>
<div class="cell ser" style="left:35.5px;top:361.5px;width:55.0px;text-align:center;font-size:11.8px;color:#1f1f1f;padding:0 0px;">MUJER</div>
<div class="cell sans" style="left:92.5px;top:361.5px;width:55.5px;text-align:center;font-size:9.6px;color:#1f1f1f;padding:0 2px;padding-left:4px;letter-spacing:0.25px;">7</div>
<div class="cell ser" style="left:35.5px;top:375.5px;width:55.0px;text-align:center;font-size:11.8px;color:#1f1f1f;padding:0 0px;">MUJER</div>
<div class="cell sans" style="left:92.5px;top:375.5px;width:55.5px;text-align:center;font-size:9.6px;color:#1f1f1f;padding:0 2px;padding-left:4px;letter-spacing:0.25px;">10</div>
<div class="cell ser" style="left:35.5px;top:389.5px;width:55.0px;text-align:center;font-size:11.8px;color:#1f1f1f;padding:0 0px;">HOMBRE</div>
<div class="cell sans" style="left:92.5px;top:389.5px;width:55.5px;text-align:center;font-size:9.6px;color:#1f1f1f;padding:0 2px;padding-left:4px;letter-spacing:0.25px;">9</div>
<div class="cell ser" style="left:35.5px;top:403.5px;width:55.0px;text-align:center;font-size:11.8px;color:#1f1f1f;padding:0 0px;">HOMBRE</div>
<div class="cell sans" style="left:92.5px;top:403.5px;width:55.5px;text-align:center;font-size:9.6px;color:#1f1f1f;padding:0 2px;padding-left:4px;letter-spacing:0.25px;">7</div>
<div class="cell ser" style="left:35.5px;top:417.5px;width:55.0px;text-align:center;font-size:11.8px;color:#1f1f1f;padding:0 0px;">MUJER</div>
<div class="cell sans" style="left:92.5px;top:417.5px;width:55.5px;text-align:center;font-size:9.6px;color:#1f1f1f;padding:0 2px;padding-left:4px;letter-spacing:0.25px;">6</div>
<div class="cell ser" style="left:35.5px;top:431.5px;width:55.0px;text-align:center;font-size:11.8px;color:#1f1f1f;padding:0 0px;">MUJER</div>
<div class="cell sans" style="left:92.5px;top:431.5px;width:55.5px;text-align:center;font-size:9.6px;color:#1f1f1f;padding:0 2px;padding-left:4px;letter-spacing:0.25px;">3</div>
<div class="cell ser" style="left:35.5px;top:445.5px;width:55.0px;text-align:center;font-size:11.8px;color:#1f1f1f;padding:0 0px;">MUJER</div>
<div class="cell sans" style="left:92.5px;top:445.5px;width:55.5px;text-align:center;font-size:9.6px;color:#1f1f1f;padding:0 2px;padding-left:4px;letter-spacing:0.25px;">9</div>
<div class="cell ser" style="left:35.5px;top:459.5px;width:55.0px;text-align:center;font-size:11.8px;color:#1f1f1f;padding:0 0px;">MUJER</div>
<div class="cell sans" style="left:92.5px;top:459.5px;width:55.5px;text-align:center;font-size:9.6px;color:#1f1f1f;padding:0 2px;padding-left:4px;letter-spacing:0.25px;">9</div>
<div class="cell ser" style="left:35.5px;top:473.5px;width:55.0px;text-align:center;font-size:11.8px;color:#1f1f1f;padding:0 0px;">MUJER</div>
<div class="cell sans" style="left:92.5px;top:473.5px;width:55.5px;text-align:center;font-size:9.6px;color:#1f1f1f;padding:0 2px;padding-left:4px;letter-spacing:0.25px;">7</div>
<div class="cell ser" style="left:35.5px;top:487.5px;width:55.0px;text-align:center;font-size:11.8px;color:#1f1f1f;padding:0 0px;">MUJER</div>
<div class="cell sans" style="left:92.5px;top:487.5px;width:55.5px;text-align:center;font-size:9.6px;color:#1f1f1f;padding:0 2px;padding-left:4px;letter-spacing:0.25px;">0</div>
<div class="cell ser" style="left:35.5px;top:501.5px;width:55.0px;text-align:center;font-size:11.8px;color:#1f1f1f;padding:0 0px;">HOMBRE</div>
<div class="cell sans" style="left:92.5px;top:501.5px;width:55.5px;text-align:center;font-size:9.6px;color:#1f1f1f;padding:0 2px;padding-left:4px;letter-spacing:0.25px;">2</div>
<div class="cell ser" style="left:35.5px;top:515.5px;width:55.0px;text-align:center;font-size:11.8px;color:#1f1f1f;padding:0 0px;">MUJER</div>
<div class="cell sans" style="left:92.5px;top:515.5px;width:55.5px;text-align:center;font-size:9.6px;color:#1f1f1f;padding:0 2px;padding-left:4px;letter-spacing:0.25px;">7</div>
<div class="cell ser" style="left:35.5px;top:529.5px;width:55.0px;text-align:center;font-size:11.8px;color:#1f1f1f;padding:0 0px;">HOMBRE</div>
<div class="cell sans" style="left:92.5px;top:529.5px;width:55.5px;text-align:center;font-size:9.6px;color:#1f1f1f;padding:0 2px;padding-left:4px;letter-spacing:0.25px;">4</div>
<div class="cell ser" style="left:35.5px;top:543.5px;width:55.0px;text-align:center;font-size:11.8px;color:#1f1f1f;padding:0 0px;">HOMBRE</div>
<div class="cell sans" style="left:92.5px;top:543.5px;width:55.5px;text-align:center;font-size:9.6px;color:#1f1f1f;padding:0 2px;padding-left:4px;letter-spacing:0.25px;">4</div>
<div class="cell ser" style="left:35.5px;top:557.5px;width:55.0px;text-align:center;font-size:11.8px;color:#1f1f1f;padding:0 0px;">HOMBRE</div>
<div class="cell sans" style="left:92.5px;top:557.5px;width:55.5px;text-align:center;font-size:9.6px;color:#1f1f1f;padding:0 2px;padding-left:4px;letter-spacing:0.25px;">1</div>
<div class="cell ser" style="left:35.5px;top:571.5px;width:55.0px;text-align:center;font-size:11.8px;color:#1f1f1f;padding:0 0px;">HOMBRE</div>
<div class="cell sans" style="left:92.5px;top:571.5px;width:55.5px;text-align:center;font-size:9.6px;color:#1f1f1f;padding:0 2px;padding-left:4px;letter-spacing:0.25px;">6</div>
<div class="cell ser" style="left:35.5px;top:585.5px;width:55.0px;text-align:center;font-size:11.8px;color:#1f1f1f;padding:0 0px;">MUJER</div>
<div class="cell sans" style="left:92.5px;top:585.5px;width:55.5px;text-align:center;font-size:9.6px;color:#1f1f1f;padding:0 2px;padding-left:4px;letter-spacing:0.25px;">6</div>
<div class="cell ser" style="left:35.5px;top:599.5px;width:55.0px;text-align:center;font-size:11.8px;color:#1f1f1f;padding:0 0px;">MUJER</div>
<div class="cell sans" style="left:92.5px;top:599.5px;width:55.5px;text-align:center;font-size:9.6px;color:#1f1f1f;padding:0 2px;padding-left:4px;letter-spacing:0.25px;">2</div>
<div class="cell ser" style="left:35.5px;top:613.5px;width:55.0px;text-align:center;font-size:11.8px;color:#1f1f1f;padding:0 0px;">MUJER</div>
<div class="cell sans" style="left:92.5px;top:613.5px;width:55.5px;text-align:center;font-size:9.6px;color:#1f1f1f;padding:0 2px;padding-left:4px;letter-spacing:0.25px;">4</div>
<div class="cell ser" style="left:35.5px;top:627.5px;width:55.0px;text-align:center;font-size:11.8px;color:#1f1f1f;padding:0 0px;">HOMBRE</div>
<div class="cell sans" style="left:92.5px;top:627.5px;width:55.5px;text-align:center;font-size:9.6px;color:#1f1f1f;padding:0 2px;padding-left:4px;letter-spacing:0.25px;">4</div>
<div class="cell sans" style="left:262px;top:221px;width:54px;text-align:center;font-size:9.4px;color:#1f1f1f;padding:0 2px;letter-spacing:0.05px;">Baremo</div>
<div class="cell sans" style="left:262px;top:235px;width:54px;text-align:center;font-size:9.1px;color:#1f1f1f;padding:0 2px;letter-spacing:-0.2px;">METROS</div>
<div class="cell ser" style="left:318px;top:221.5px;width:54px;text-align:center;font-size:11.8px;color:#1f1f1f;padding:0 0px;">Nota Salto</div>
<div class="cell ser" style="left:374px;top:221.5px;width:54px;text-align:left;font-size:11.8px;color:#1f1f1f;padding:0 0px;">F. Absoluta</div>
<div class="cell ser" style="left:430px;top:221.5px;width:54px;text-align:left;font-size:11.8px;color:#1f1f1f;padding:0 0px;"><span style="margin-left:-5px">F. Absol. Ac</span></div>
<div class="cell ser" style="left:486px;top:221.5px;width:54px;text-align:left;font-size:11.8px;color:#1f1f1f;padding:0 0px;padding-left:3px;">F. relativa</div>
<div class="cell ser" style="left:318px;top:237px;width:54px;text-align:center;font-size:11.7px;color:#c81610;padding:0 0px;font-weight:bold;padding-left:3.5px;overflow:visible;">( xi )</div>
<div class="cell ser" style="left:374px;top:237px;width:54px;text-align:center;font-size:11.7px;color:#c81610;padding:0 0px;font-weight:bold;padding-left:3.5px;overflow:visible;">( fi )</div>
<div class="cell ser" style="left:430px;top:237px;width:54px;text-align:center;font-size:11.7px;color:#c81610;padding:0 0px;font-weight:bold;padding-left:3.5px;overflow:visible;">( Fi )</div>
<div class="cell ser" style="left:486px;top:237px;width:54px;text-align:center;font-size:11.7px;color:#c81610;padding:0 0px;font-weight:bold;padding-left:3.5px;overflow:visible;">( hi )</div>
<div class="cell ser" style="left:542px;top:237px;width:74px;text-align:center;font-size:11.7px;color:#c81610;padding:0 0px;font-weight:bold;padding-left:3.5px;overflow:visible;">( 100hi )</div>
<div class="cell ser" style="left:618px;top:237px;width:54px;text-align:center;font-size:11.7px;color:#c81610;padding:0 0px;font-weight:bold;padding-left:3.5px;overflow:visible;">( Hi )</div>
<div class="cell ser" style="left:674px;top:237px;width:54px;text-align:center;font-size:11.7px;color:#c81610;padding:0 0px;font-weight:bold;padding-left:3.5px;overflow:visible;">( xi · fi)</div>
<div class="cell sans" style="left:318px;top:403px;width:54px;text-align:center;font-size:9.1px;color:#1f1f1f;padding:0 2px;letter-spacing:-0.5px;">TOTALES</div>
<div class="cell sans" style="left:786px;top:221px;width:54px;text-align:center;font-size:9.4px;color:#1f1f1f;padding:0 2px;letter-spacing:0.05px;">Baremo</div>
<div class="cell sans" style="left:786px;top:235px;width:54px;text-align:center;font-size:9.1px;color:#1f1f1f;padding:0 2px;letter-spacing:-0.2px;">METROS</div>
<div class="cell ser" style="left:842px;top:221.5px;width:54px;text-align:center;font-size:11.8px;color:#1f1f1f;padding:0 0px;">Nota Salto</div>
<div class="cell ser" style="left:898px;top:221.5px;width:54px;text-align:left;font-size:11.8px;color:#1f1f1f;padding:0 0px;">F. Absoluta</div>
<div class="cell ser" style="left:954px;top:221.5px;width:54px;text-align:left;font-size:11.8px;color:#1f1f1f;padding:0 0px;"><span style="margin-left:-5px">F. Absol. Ac</span></div>
<div class="cell ser" style="left:1010px;top:221.5px;width:54px;text-align:left;font-size:11.8px;color:#1f1f1f;padding:0 0px;padding-left:3px;">F. relativa</div>
<div class="cell ser" style="left:842px;top:237px;width:54px;text-align:center;font-size:11.7px;color:#c81610;padding:0 0px;font-weight:bold;padding-left:3.5px;overflow:visible;">( xi )</div>
<div class="cell ser" style="left:898px;top:237px;width:54px;text-align:center;font-size:11.7px;color:#c81610;padding:0 0px;font-weight:bold;padding-left:3.5px;overflow:visible;">( fi )</div>
<div class="cell ser" style="left:954px;top:237px;width:54px;text-align:center;font-size:11.7px;color:#c81610;padding:0 0px;font-weight:bold;padding-left:3.5px;overflow:visible;">( Fi )</div>
<div class="cell ser" style="left:1010px;top:237px;width:54px;text-align:center;font-size:11.7px;color:#c81610;padding:0 0px;font-weight:bold;padding-left:3.5px;overflow:visible;">( hi )</div>
<div class="cell ser" style="left:1066px;top:237px;width:54px;text-align:center;font-size:11.7px;color:#c81610;padding:0 0px;font-weight:bold;padding-left:3.5px;overflow:visible;">( 100hi )</div>
<div class="cell ser" style="left:1122px;top:237px;width:54px;text-align:center;font-size:11.7px;color:#c81610;padding:0 0px;font-weight:bold;padding-left:3.5px;overflow:visible;">( Hi )</div>
<div class="cell ser" style="left:1178px;top:237px;width:50px;text-align:center;font-size:11.7px;color:#c81610;padding:0 0px;font-weight:bold;padding-left:3.5px;overflow:visible;">( xi · fi)</div>
<div class="cell sans" style="left:842px;top:403px;width:54px;text-align:center;font-size:9.1px;color:#1f1f1f;padding:0 2px;letter-spacing:-0.5px;">TOTALES</div>
<div class="cell ser" style="left:542px;top:221.5px;width:74px;text-align:center;font-size:11.8px;color:#1f1f1f;padding:0 0px;">F. relativa (%)</div>
<div class="cell ser" style="left:618px;top:221.5px;width:110px;font-size:11.8px;"><span style="margin-left:-5px">F. rel. Acum.</span></div>
<div class="cell ser" style="left:1066px;top:221.5px;width:54px;text-align:left;font-size:11.8px;color:#1f1f1f;padding:0 0px;"><span style="margin-left:-6px">F. relativa (%)</span></div>
<div class="cell ser" style="left:1122px;top:221.5px;width:100px;font-size:11.8px;"><span style="margin-left:-6px">F. rel. Acum.</span></div>
<div class="cell sans" style="left:262px;top:249px;width:54px;text-align:center;font-size:9.6px;color:#1f1f1f;padding:0 2px;letter-spacing:0.25px;">&lt;3</div>
<div class="cell sans" style="left:318px;top:249px;width:54px;text-align:center;font-size:9.6px;color:#1f1f1f;padding:0 2px;letter-spacing:0.25px;">0</div>
<div class="cell sans" style="left:374px;top:249px;width:54px;text-align:right;font-size:9.6px;color:#1f1f1f;padding:0 0.75px;letter-spacing:0.25px;">2</div>
<div class="cell sans" style="left:430px;top:249px;width:54px;text-align:right;font-size:9.6px;color:#1f1f1f;padding:0 0.75px;letter-spacing:0.25px;">2</div>
<div class="cell sans" style="left:486px;top:249px;width:54px;text-align:right;font-size:9.6px;color:#1f1f1f;padding:0 0.75px;letter-spacing:0.25px;">0,026</div>
<div class="cell sans" style="left:542px;top:249px;width:74px;text-align:right;font-size:9.6px;color:#1f1f1f;padding:0 0.75px;letter-spacing:0.25px;">2,60</div>
<div class="cell sans" style="left:618px;top:249px;width:54px;text-align:right;font-size:9.6px;color:#1f1f1f;padding:0 0.75px;letter-spacing:0.25px;">0,026</div>
<div class="cell sans" style="left:674px;top:249px;width:54px;text-align:right;font-size:9.6px;color:#1f1f1f;padding:0 0.75px;letter-spacing:0.25px;">0</div>
<div class="cell sans" style="left:262px;top:263px;width:54px;text-align:center;font-size:9.6px;color:#1f1f1f;padding:0 2px;letter-spacing:0.25px;">3,0</div>
<div class="cell sans" style="left:318px;top:263px;width:54px;text-align:center;font-size:9.6px;color:#1f1f1f;padding:0 2px;letter-spacing:0.25px;">1</div>
<div class="cell sans" style="left:374px;top:263px;width:54px;text-align:right;font-size:9.6px;color:#1f1f1f;padding:0 0.75px;letter-spacing:0.25px;">3</div>
<div class="cell sans" style="left:430px;top:263px;width:54px;text-align:right;font-size:9.6px;color:#1f1f1f;padding:0 0.75px;letter-spacing:0.25px;">5</div>
<div class="cell sans" style="left:486px;top:263px;width:54px;text-align:right;font-size:9.6px;color:#1f1f1f;padding:0 0.75px;letter-spacing:0.25px;">0,039</div>
<div class="cell sans" style="left:542px;top:263px;width:74px;text-align:right;font-size:9.6px;color:#1f1f1f;padding:0 0.75px;letter-spacing:0.25px;">3,90</div>
<div class="cell sans" style="left:618px;top:263px;width:54px;text-align:right;font-size:9.6px;color:#1f1f1f;padding:0 0.75px;letter-spacing:0.25px;">0,06</div>
<div class="cell sans" style="left:674px;top:263px;width:54px;text-align:right;font-size:9.6px;color:#1f1f1f;padding:0 0.75px;letter-spacing:0.25px;">3</div>
<div class="cell sans" style="left:262px;top:277px;width:54px;text-align:center;font-size:9.6px;color:#1f1f1f;padding:0 2px;letter-spacing:0.25px;">3,5</div>
<div class="cell sans" style="left:318px;top:277px;width:54px;text-align:center;font-size:9.6px;color:#1f1f1f;padding:0 2px;letter-spacing:0.25px;">2</div>
<div class="cell sans" style="left:374px;top:277px;width:54px;text-align:right;font-size:9.6px;color:#1f1f1f;padding:0 0.75px;letter-spacing:0.25px;">5</div>
<div class="cell sans" style="left:430px;top:277px;width:54px;text-align:right;font-size:9.6px;color:#1f1f1f;padding:0 0.75px;letter-spacing:0.25px;">10</div>
<div class="cell sans" style="left:486px;top:277px;width:54px;text-align:right;font-size:9.6px;color:#1f1f1f;padding:0 0.75px;letter-spacing:0.25px;">0,065</div>
<div class="cell sans" style="left:542px;top:277px;width:74px;text-align:right;font-size:9.6px;color:#1f1f1f;padding:0 0.75px;letter-spacing:0.25px;">6,49</div>
<div class="cell sans" style="left:618px;top:277px;width:54px;text-align:right;font-size:9.6px;color:#1f1f1f;padding:0 0.75px;letter-spacing:0.25px;">0,13</div>
<div class="cell sans" style="left:674px;top:277px;width:54px;text-align:right;font-size:9.6px;color:#1f1f1f;padding:0 0.75px;letter-spacing:0.25px;">10</div>
<div class="cell sans" style="left:262px;top:291px;width:54px;text-align:center;font-size:9.6px;color:#1f1f1f;padding:0 2px;letter-spacing:0.25px;">4,0</div>
<div class="cell sans" style="left:318px;top:291px;width:54px;text-align:center;font-size:9.6px;color:#1f1f1f;padding:0 2px;letter-spacing:0.25px;">3</div>
<div class="cell sans" style="left:374px;top:291px;width:54px;text-align:right;font-size:9.6px;color:#1f1f1f;padding:0 0.75px;letter-spacing:0.25px;">5</div>
<div class="cell sans" style="left:430px;top:291px;width:54px;text-align:right;font-size:9.6px;color:#1f1f1f;padding:0 0.75px;letter-spacing:0.25px;">15</div>
<div class="cell sans" style="left:486px;top:291px;width:54px;text-align:right;font-size:9.6px;color:#1f1f1f;padding:0 0.75px;letter-spacing:0.25px;">0,065</div>
<div class="cell sans" style="left:542px;top:291px;width:74px;text-align:right;font-size:9.6px;color:#1f1f1f;padding:0 0.75px;letter-spacing:0.25px;">6,49</div>
<div class="cell sans" style="left:618px;top:291px;width:54px;text-align:right;font-size:9.6px;color:#1f1f1f;padding:0 0.75px;letter-spacing:0.25px;">0,19</div>
<div class="cell sans" style="left:674px;top:291px;width:54px;text-align:right;font-size:9.6px;color:#1f1f1f;padding:0 0.75px;letter-spacing:0.25px;">15</div>
<div class="cell sans" style="left:262px;top:305px;width:54px;text-align:center;font-size:9.6px;color:#1f1f1f;padding:0 2px;letter-spacing:0.25px;">4,2</div>
<div class="cell sans" style="left:318px;top:305px;width:54px;text-align:center;font-size:9.6px;color:#1f1f1f;padding:0 2px;letter-spacing:0.25px;">4</div>
<div class="cell sans" style="left:374px;top:305px;width:54px;text-align:right;font-size:9.6px;color:#1f1f1f;padding:0 0.75px;letter-spacing:0.25px;">9</div>
<div class="cell sans" style="left:430px;top:305px;width:54px;text-align:right;font-size:9.6px;color:#1f1f1f;padding:0 0.75px;letter-spacing:0.25px;">24</div>
<div class="cell sans" style="left:486px;top:305px;width:54px;text-align:right;font-size:9.6px;color:#1f1f1f;padding:0 0.75px;letter-spacing:0.25px;">0,117</div>
<div class="cell sans" style="left:542px;top:305px;width:74px;text-align:right;font-size:9.6px;color:#1f1f1f;padding:0 0.75px;letter-spacing:0.25px;">11,69</div>
<div class="cell sans" style="left:618px;top:305px;width:54px;text-align:right;font-size:9.6px;color:#1f1f1f;padding:0 0.75px;letter-spacing:0.25px;">0,31</div>
<div class="cell sans" style="left:674px;top:305px;width:54px;text-align:right;font-size:9.6px;color:#1f1f1f;padding:0 0.75px;letter-spacing:0.25px;">36</div>
<div class="cell sans" style="left:262px;top:319px;width:54px;text-align:center;font-size:9.6px;color:#1f1f1f;padding:0 2px;letter-spacing:0.25px;">4,5</div>
<div class="cell sans" style="left:318px;top:319px;width:54px;text-align:center;font-size:9.6px;color:#1f1f1f;padding:0 2px;letter-spacing:0.25px;">5</div>
<div class="cell sans" style="left:374px;top:319px;width:54px;text-align:right;font-size:9.6px;color:#1f1f1f;padding:0 0.75px;letter-spacing:0.25px;">7</div>
<div class="cell sans" style="left:430px;top:319px;width:54px;text-align:right;font-size:9.6px;color:#1f1f1f;padding:0 0.75px;letter-spacing:0.25px;">31</div>
<div class="cell sans" style="left:486px;top:319px;width:54px;text-align:right;font-size:9.6px;color:#1f1f1f;padding:0 0.75px;letter-spacing:0.25px;">0,091</div>
<div class="cell sans" style="left:542px;top:319px;width:74px;text-align:right;font-size:9.6px;color:#1f1f1f;padding:0 0.75px;letter-spacing:0.25px;">9,09</div>
<div class="cell sans" style="left:618px;top:319px;width:54px;text-align:right;font-size:9.6px;color:#1f1f1f;padding:0 0.75px;letter-spacing:0.25px;">0,40</div>
<div class="cell sans" style="left:674px;top:319px;width:54px;text-align:right;font-size:9.6px;color:#1f1f1f;padding:0 0.75px;letter-spacing:0.25px;">35</div>
<div class="cell sans" style="left:262px;top:333px;width:54px;text-align:center;font-size:9.6px;color:#1f1f1f;padding:0 2px;letter-spacing:0.25px;">5,0</div>
<div class="cell sans" style="left:318px;top:333px;width:54px;text-align:center;font-size:9.6px;color:#1f1f1f;padding:0 2px;letter-spacing:0.25px;">6</div>
<div class="cell sans" style="left:374px;top:333px;width:54px;text-align:right;font-size:9.6px;color:#1f1f1f;padding:0 0.75px;letter-spacing:0.25px;">15</div>
<div class="cell sans" style="left:430px;top:333px;width:54px;text-align:right;font-size:9.6px;color:#1f1f1f;padding:0 0.75px;letter-spacing:0.25px;">46</div>
<div class="cell sans" style="left:486px;top:333px;width:54px;text-align:right;font-size:9.6px;color:#1f1f1f;padding:0 0.75px;letter-spacing:0.25px;">0,195</div>
<div class="cell sans" style="left:542px;top:333px;width:74px;text-align:right;font-size:9.6px;color:#1f1f1f;padding:0 0.75px;letter-spacing:0.25px;">19,48</div>
<div class="cell sans" style="left:618px;top:333px;width:54px;text-align:right;font-size:9.6px;color:#1f1f1f;padding:0 0.75px;letter-spacing:0.25px;">0,60</div>
<div class="cell sans" style="left:674px;top:333px;width:54px;text-align:right;font-size:9.6px;color:#1f1f1f;padding:0 0.75px;letter-spacing:0.25px;">90</div>
<div class="cell sans" style="left:262px;top:347px;width:54px;text-align:center;font-size:9.6px;color:#1f1f1f;padding:0 2px;letter-spacing:0.25px;">5,5</div>
<div class="cell sans" style="left:318px;top:347px;width:54px;text-align:center;font-size:9.6px;color:#1f1f1f;padding:0 2px;letter-spacing:0.25px;">7</div>
<div class="cell sans" style="left:374px;top:347px;width:54px;text-align:right;font-size:9.6px;color:#1f1f1f;padding:0 0.75px;letter-spacing:0.25px;">13</div>
<div class="cell sans" style="left:430px;top:347px;width:54px;text-align:right;font-size:9.6px;color:#1f1f1f;padding:0 0.75px;letter-spacing:0.25px;">59</div>
<div class="cell sans" style="left:486px;top:347px;width:54px;text-align:right;font-size:9.6px;color:#1f1f1f;padding:0 0.75px;letter-spacing:0.25px;">0,169</div>
<div class="cell sans" style="left:542px;top:347px;width:74px;text-align:right;font-size:9.6px;color:#1f1f1f;padding:0 0.75px;letter-spacing:0.25px;">16,88</div>
<div class="cell sans" style="left:618px;top:347px;width:54px;text-align:right;font-size:9.6px;color:#1f1f1f;padding:0 0.75px;letter-spacing:0.25px;">0,77</div>
<div class="cell sans" style="left:674px;top:347px;width:54px;text-align:right;font-size:9.6px;color:#1f1f1f;padding:0 0.75px;letter-spacing:0.25px;">91</div>
<div class="cell sans" style="left:262px;top:361px;width:54px;text-align:center;font-size:9.6px;color:#1f1f1f;padding:0 2px;letter-spacing:0.25px;">5,8</div>
<div class="cell sans" style="left:318px;top:361px;width:54px;text-align:center;font-size:9.6px;color:#1f1f1f;padding:0 2px;letter-spacing:0.25px;">8</div>
<div class="cell sans" style="left:374px;top:361px;width:54px;text-align:right;font-size:9.6px;color:#1f1f1f;padding:0 0.75px;letter-spacing:0.25px;">4</div>
<div class="cell sans" style="left:430px;top:361px;width:54px;text-align:right;font-size:9.6px;color:#1f1f1f;padding:0 0.75px;letter-spacing:0.25px;">63</div>
<div class="cell sans" style="left:486px;top:361px;width:54px;text-align:right;font-size:9.6px;color:#1f1f1f;padding:0 0.75px;letter-spacing:0.25px;">0,052</div>
<div class="cell sans" style="left:542px;top:361px;width:74px;text-align:right;font-size:9.6px;color:#1f1f1f;padding:0 0.75px;letter-spacing:0.25px;">5,19</div>
<div class="cell sans" style="left:618px;top:361px;width:54px;text-align:right;font-size:9.6px;color:#1f1f1f;padding:0 0.75px;letter-spacing:0.25px;">0,82</div>
<div class="cell sans" style="left:674px;top:361px;width:54px;text-align:right;font-size:9.6px;color:#1f1f1f;padding:0 0.75px;letter-spacing:0.25px;">32</div>
<div class="cell sans" style="left:262px;top:375px;width:54px;text-align:center;font-size:9.6px;color:#1f1f1f;padding:0 2px;letter-spacing:0.25px;">6,0</div>
<div class="cell sans" style="left:318px;top:375px;width:54px;text-align:center;font-size:9.6px;color:#1f1f1f;padding:0 2px;letter-spacing:0.25px;">9</div>
<div class="cell sans" style="left:374px;top:375px;width:54px;text-align:right;font-size:9.6px;color:#1f1f1f;padding:0 0.75px;letter-spacing:0.25px;">13</div>
<div class="cell sans" style="left:430px;top:375px;width:54px;text-align:right;font-size:9.6px;color:#1f1f1f;padding:0 0.75px;letter-spacing:0.25px;">76</div>
<div class="cell sans" style="left:486px;top:375px;width:54px;text-align:right;font-size:9.6px;color:#1f1f1f;padding:0 0.75px;letter-spacing:0.25px;">0,169</div>
<div class="cell sans" style="left:542px;top:375px;width:74px;text-align:right;font-size:9.6px;color:#1f1f1f;padding:0 0.75px;letter-spacing:0.25px;">16,88</div>
<div class="cell sans" style="left:618px;top:375px;width:54px;text-align:right;font-size:9.6px;color:#1f1f1f;padding:0 0.75px;letter-spacing:0.25px;">0,99</div>
<div class="cell sans" style="left:674px;top:375px;width:54px;text-align:right;font-size:9.6px;color:#1f1f1f;padding:0 0.75px;letter-spacing:0.25px;">117</div>
<div class="cell sans" style="left:262px;top:389px;width:54px;text-align:center;font-size:9.6px;color:#1f1f1f;padding:0 2px;letter-spacing:0.25px;">6,5</div>
<div class="cell sans" style="left:318px;top:389px;width:54px;text-align:center;font-size:9.6px;color:#1f1f1f;padding:0 2px;letter-spacing:0.25px;">10</div>
<div class="cell sans" style="left:374px;top:389px;width:54px;text-align:right;font-size:9.6px;color:#1f1f1f;padding:0 0.75px;letter-spacing:0.25px;">1</div>
<div class="cell sans" style="left:430px;top:389px;width:54px;text-align:right;font-size:9.6px;color:#1f1f1f;padding:0 0.75px;letter-spacing:0.25px;">77</div>
<div class="cell sans" style="left:486px;top:389px;width:54px;text-align:right;font-size:9.6px;color:#1f1f1f;padding:0 0.75px;letter-spacing:0.25px;">0,013</div>
<div class="cell sans" style="left:542px;top:389px;width:74px;text-align:right;font-size:9.6px;color:#1f1f1f;padding:0 0.75px;letter-spacing:0.25px;">1,30</div>
<div class="cell sans" style="left:618px;top:389px;width:54px;text-align:right;font-size:9.6px;color:#1f1f1f;padding:0 0.75px;letter-spacing:0.25px;">1,00</div>
<div class="cell sans" style="left:674px;top:389px;width:54px;text-align:right;font-size:9.6px;color:#1f1f1f;padding:0 0.75px;letter-spacing:0.25px;">10</div>
<div class="cell sans" style="left:374px;top:403px;width:54px;text-align:right;font-size:9.6px;color:#1f1f1f;padding:0 0.75px;letter-spacing:0.25px;">77</div>
<div class="cell sans" style="left:486px;top:403px;width:54px;text-align:right;font-size:9.6px;color:#1f1f1f;padding:0 0.75px;letter-spacing:0.25px;">1,000</div>
<div class="cell sans" style="left:542px;top:403px;width:74px;text-align:right;font-size:9.6px;color:#1f1f1f;padding:0 0.75px;letter-spacing:0.25px;">100,00</div>
<div class="cell sans" style="left:674px;top:403px;width:54px;text-align:right;font-size:9.6px;color:#1f1f1f;padding:0 0.75px;letter-spacing:0.25px;">439</div>
<div class="cell sans" style="left:786px;top:249px;width:54px;text-align:center;font-size:9.6px;color:#1f1f1f;padding:0 2px;letter-spacing:0.25px;">3</div>
<div class="cell sans" style="left:786px;top:263px;width:54px;text-align:center;font-size:9.6px;color:#1f1f1f;padding:0 2px;letter-spacing:0.25px;">3,5</div>
<div class="cell sans" style="left:786px;top:277px;width:54px;text-align:center;font-size:9.6px;color:#1f1f1f;padding:0 2px;letter-spacing:0.25px;">4</div>
<div class="cell sans" style="left:786px;top:291px;width:54px;text-align:center;font-size:9.6px;color:#1f1f1f;padding:0 2px;letter-spacing:0.25px;">4,2</div>
<div class="cell sans" style="left:786px;top:305px;width:54px;text-align:center;font-size:9.6px;color:#1f1f1f;padding:0 2px;letter-spacing:0.25px;">4,5</div>
<div class="cell sans" style="left:786px;top:319px;width:54px;text-align:center;font-size:9.6px;color:#1f1f1f;padding:0 2px;letter-spacing:0.25px;">5</div>
<div class="cell sans" style="left:786px;top:333px;width:54px;text-align:center;font-size:9.6px;color:#1f1f1f;padding:0 2px;letter-spacing:0.25px;">5,5</div>
<div class="cell sans" style="left:786px;top:347px;width:54px;text-align:center;font-size:9.6px;color:#1f1f1f;padding:0 2px;letter-spacing:0.25px;">5,8</div>
<div class="cell sans" style="left:786px;top:361px;width:54px;text-align:center;font-size:9.6px;color:#1f1f1f;padding:0 2px;letter-spacing:0.25px;">6</div>
<div class="cell sans" style="left:786px;top:375px;width:54px;text-align:center;font-size:9.6px;color:#1f1f1f;padding:0 2px;letter-spacing:0.25px;">6,5</div>
<div class="abs" style="left:1064px;top:527.8px;width:56.8px;height:15.2px;border:1.4px solid #2c52a3"></div>
<div class="abs" style="left:1117px;top:539.2px;width:7px;height:7px;border-radius:4px;background:#2c52a3;border:1px solid #fff"></div>
<div class="abs" style="left:285px;top:438px;width:321px;height:197px;background:#fff;border:1px solid #d4d4d4;border-bottom:none"></div>
<svg style="left:285px;top:438px" width="321" height="197" viewBox="285 438 321 197" font-family="Liberation Sans, sans-serif"><path d="M340 551.5H593" stroke="#e4e4e4" stroke-width="1"/><path d="M340 513.3H593" stroke="#e4e4e4" stroke-width="1"/><path d="M340 475.0H593" stroke="#e4e4e4" stroke-width="1"/><path d="M340 589.8H593" stroke="#8c8c8c" stroke-width="1"/><rect x="344.8" y="574.5" width="14.4" height="15.3" rx="1" fill="#5b9bd5"/><text x="352.0" y="585.0" font-size="8.8" font-weight="bold" fill="#203864" text-anchor="middle">2</text><text x="352.0" y="603" font-size="8.4" fill="#333" text-anchor="middle">0</text><rect x="367.5" y="566.8" width="14.4" height="23.0" rx="1" fill="#5b9bd5"/><text x="374.7" y="577.3" font-size="8.8" font-weight="bold" fill="#203864" text-anchor="middle">3</text><text x="374.7" y="603" font-size="8.4" fill="#333" text-anchor="middle">1</text><rect x="390.2" y="551.5" width="14.4" height="38.2" rx="1" fill="#5b9bd5"/><text x="397.4" y="562.0" font-size="8.8" font-weight="bold" fill="#203864" text-anchor="middle">5</text><text x="397.4" y="603" font-size="8.4" fill="#333" text-anchor="middle">2</text><rect x="413.0" y="551.5" width="14.4" height="38.2" rx="1" fill="#5b9bd5"/><text x="420.2" y="562.0" font-size="8.8" font-weight="bold" fill="#203864" text-anchor="middle">5</text><text x="420.2" y="603" font-size="8.4" fill="#333" text-anchor="middle">3</text><rect x="435.7" y="520.9" width="14.4" height="68.9" rx="1" fill="#5b9bd5"/><text x="442.9" y="531.4" font-size="8.8" font-weight="bold" fill="#203864" text-anchor="middle">9</text><text x="442.9" y="603" font-size="8.4" fill="#333" text-anchor="middle">4</text><rect x="458.4" y="536.2" width="14.4" height="53.6" rx="1" fill="#5b9bd5"/><text x="465.6" y="546.8" font-size="8.8" font-weight="bold" fill="#203864" text-anchor="middle">7</text><text x="465.6" y="603" font-size="8.4" fill="#333" text-anchor="middle">5</text><rect x="481.1" y="475.0" width="14.4" height="114.8" rx="1" fill="#5b9bd5"/><text x="488.3" y="485.5" font-size="8.8" font-weight="bold" fill="#203864" text-anchor="middle">15</text><text x="488.3" y="603" font-size="8.4" fill="#333" text-anchor="middle">6</text><rect x="503.8" y="490.3" width="14.4" height="99.5" rx="1" fill="#5b9bd5"/><text x="511.0" y="500.8" font-size="8.8" font-weight="bold" fill="#203864" text-anchor="middle">13</text><text x="511.0" y="603" font-size="8.4" fill="#333" text-anchor="middle">7</text><rect x="526.6" y="559.2" width="14.4" height="30.6" rx="1" fill="#5b9bd5"/><text x="533.8" y="569.7" font-size="8.8" font-weight="bold" fill="#203864" text-anchor="middle">4</text><text x="533.8" y="603" font-size="8.4" fill="#333" text-anchor="middle">8</text><rect x="549.3" y="490.3" width="14.4" height="99.5" rx="1" fill="#5b9bd5"/><text x="556.5" y="500.8" font-size="8.8" font-weight="bold" fill="#203864" text-anchor="middle">13</text><text x="556.5" y="603" font-size="8.4" fill="#333" text-anchor="middle">9</text><rect x="572.0" y="582.1" width="14.4" height="7.7" rx="1" fill="#5b9bd5"/><text x="579.2" y="572.1" font-size="8.6" fill="#6fa8dc" text-anchor="middle">1</text><text x="579.2" y="603" font-size="8.4" fill="#333" text-anchor="middle">10</text><text x="332" y="592.8" font-size="8.4" fill="#333" text-anchor="end">0</text><text x="332" y="554.5" font-size="8.4" fill="#333" text-anchor="end">5</text><text x="332" y="516.3" font-size="8.4" fill="#333" text-anchor="end">10</text><text x="332" y="478.0" font-size="8.4" fill="#333" text-anchor="end">15</text><text x="445.5" y="460.5" font-size="12.6" fill="#595959" text-anchor="middle" textLength="192" lengthAdjust="spacingAndGlyphs">NOTAS DE BALÓN DE HOMBRES</text><text x="466" y="624" font-size="7.6" fill="#333" text-anchor="middle">NOTAS</text><text transform="translate(303 536) rotate(-90)" font-size="7.2" fill="#333" text-anchor="middle" textLength="86" lengthAdjust="spacingAndGlyphs">NÚMERO DE HOMBRES</text></svg>
<svg style="left:493.8px;top:472.6px" width="13" height="20.6" viewBox="0 0 12 19"><path d="M0.7 0.8 V15 L4 11.8 L6.4 17.6 L8.6 16.7 L6.2 11 H10.8Z" fill="#fff" stroke="#333" stroke-width="0.75"/></svg>
<div class="abs" style="left:0px;top:193px;width:1238px;height:18px;background:#fff"></div>
<div class="abs" style="left:1065px;top:194px;width:56px;height:17px;background:#d3e3fd"></div>
<div class="abs" style="left:0px;top:193.0px;width:1238px;height:1px;background:#dadada"></div>
<div class="abs" style="left:34px;top:210.5px;width:1195px;height:1px;background:#c9c9c9"></div>
<div class="abs" style="left:34px;top:194px;width:1px;height:17px;background:#d5d5d5"></div>
<div class="t" style="left:34.5px;top:198.5px;width:57.0px;text-align:center;font-size:8.7px;color:#63666a;">A</div>
<div class="abs" style="left:91px;top:194px;width:1px;height:17px;background:#d5d5d5"></div>
<div class="t" style="left:91.5px;top:198.5px;width:57.5px;text-align:center;font-size:8.7px;color:#63666a;">B</div>
<div class="abs" style="left:148px;top:194px;width:1px;height:17px;background:#d5d5d5"></div>
<div class="t" style="left:149px;top:198.5px;width:56px;text-align:center;font-size:8.7px;color:#63666a;">C</div>
<div class="abs" style="left:204px;top:194px;width:1px;height:17px;background:#d5d5d5"></div>
<div class="t" style="left:205px;top:198.5px;width:56px;text-align:center;font-size:8.7px;color:#63666a;">D</div>
<div class="abs" style="left:260px;top:194px;width:1px;height:17px;background:#d5d5d5"></div>
<div class="t" style="left:261px;top:198.5px;width:56px;text-align:center;font-size:8.7px;color:#63666a;">E</div>
<div class="abs" style="left:316px;top:194px;width:1px;height:17px;background:#d5d5d5"></div>
<div class="t" style="left:317px;top:198.5px;width:56px;text-align:center;font-size:8.7px;color:#63666a;">F</div>
<div class="abs" style="left:372px;top:194px;width:1px;height:17px;background:#d5d5d5"></div>
<div class="t" style="left:373px;top:198.5px;width:56px;text-align:center;font-size:8.7px;color:#63666a;">G</div>
<div class="abs" style="left:428px;top:194px;width:1px;height:17px;background:#d5d5d5"></div>
<div class="t" style="left:429px;top:198.5px;width:56px;text-align:center;font-size:8.7px;color:#63666a;">H</div>
<div class="abs" style="left:484px;top:194px;width:1px;height:17px;background:#d5d5d5"></div>
<div class="t" style="left:485px;top:198.5px;width:56px;text-align:center;font-size:8.7px;color:#63666a;">I</div>
<div class="abs" style="left:540px;top:194px;width:1px;height:17px;background:#d5d5d5"></div>
<div class="t" style="left:541px;top:198.5px;width:76px;text-align:center;font-size:8.7px;color:#63666a;">J</div>
<div class="abs" style="left:616px;top:194px;width:1px;height:17px;background:#d5d5d5"></div>
<div class="t" style="left:617px;top:198.5px;width:56px;text-align:center;font-size:8.7px;color:#63666a;">K</div>
<div class="abs" style="left:672px;top:194px;width:1px;height:17px;background:#d5d5d5"></div>
<div class="t" style="left:673px;top:198.5px;width:56px;text-align:center;font-size:8.7px;color:#63666a;">L</div>
<div class="abs" style="left:728px;top:194px;width:1px;height:17px;background:#d5d5d5"></div>
<div class="t" style="left:729px;top:198.5px;width:56px;text-align:center;font-size:8.7px;color:#63666a;">M</div>
<div class="abs" style="left:784px;top:194px;width:1px;height:17px;background:#d5d5d5"></div>
<div class="t" style="left:785px;top:198.5px;width:56px;text-align:center;font-size:8.7px;color:#63666a;">N</div>
<div class="abs" style="left:840px;top:194px;width:1px;height:17px;background:#d5d5d5"></div>
<div class="t" style="left:841px;top:198.5px;width:56px;text-align:center;font-size:8.7px;color:#63666a;">O</div>
<div class="abs" style="left:896px;top:194px;width:1px;height:17px;background:#d5d5d5"></div>
<div class="t" style="left:897px;top:198.5px;width:56px;text-align:center;font-size:8.7px;color:#63666a;">P</div>
<div class="abs" style="left:952px;top:194px;width:1px;height:17px;background:#d5d5d5"></div>
<div class="t" style="left:953px;top:198.5px;width:56px;text-align:center;font-size:8.7px;color:#63666a;">Q</div>
<div class="abs" style="left:1008px;top:194px;width:1px;height:17px;background:#d5d5d5"></div>
<div class="t" style="left:1009px;top:198.5px;width:56px;text-align:center;font-size:8.7px;color:#63666a;">R</div>
<div class="abs" style="left:1064px;top:194px;width:1px;height:17px;background:#d5d5d5"></div>
<div class="t" style="left:1065px;top:198.5px;width:56px;text-align:center;font-size:8.7px;font-weight:bold;color:#0b1f44;">S</div>
<div class="abs" style="left:1120px;top:194px;width:1px;height:17px;background:#d5d5d5"></div>
<div class="t" style="left:1121px;top:198.5px;width:56px;text-align:center;font-size:8.7px;color:#63666a;">T</div>
<div class="abs" style="left:1176px;top:194px;width:1px;height:17px;background:#d5d5d5"></div>
<div class="t" style="left:1177px;top:198.5px;width:52px;text-align:center;font-size:8.7px;color:#63666a;">U</div>
<div class="abs" style="left:1228px;top:194px;width:1px;height:17px;background:#d5d5d5"></div>
<div class="abs" style="left:0px;top:211px;width:34px;height:424px;background:#fff"></div>
<div class="abs" style="left:0px;top:529px;width:34px;height:14px;background:#d3e3fd"></div>
<div class="t" style="left:0;top:210.5px;width:34px;text-align:center;font-size:7.7px;color:#575a5d;">4</div>
<div class="abs" style="left:0px;top:220.5px;width:34px;height:1px;background:#dcdcdc"></div>
<div class="t" style="left:0;top:224.5px;width:34px;text-align:center;font-size:7.7px;color:#575a5d;">5</div>
<div class="abs" style="left:0px;top:234.5px;width:34px;height:1px;background:#dcdcdc"></div>
<div class="t" style="left:0;top:238.5px;width:34px;text-align:center;font-size:7.7px;color:#575a5d;">6</div>
<div class="abs" style="left:0px;top:248.5px;width:34px;height:1px;background:#dcdcdc"></div>
<div class="t" style="left:0;top:252.5px;width:34px;text-align:center;font-size:7.7px;color:#575a5d;">7</div>
<div class="abs" style="left:0px;top:262.5px;width:34px;height:1px;background:#dcdcdc"></div>
<div class="t" style="left:0;top:266.5px;width:34px;text-align:center;font-size:7.7px;color:#575a5d;">8</div>
<div class="abs" style="left:0px;top:276.5px;width:34px;height:1px;background:#dcdcdc"></div>
<div class="t" style="left:0;top:280.5px;width:34px;text-align:center;font-size:7.7px;color:#575a5d;">9</div>
<div class="abs" style="left:0px;top:290.5px;width:34px;height:1px;background:#dcdcdc"></div>
<div class="t" style="left:0;top:294.5px;width:34px;text-align:center;font-size:7.7px;color:#575a5d;">10</div>
<div class="abs" style="left:0px;top:304.5px;width:34px;height:1px;background:#dcdcdc"></div>
<div class="t" style="left:0;top:308.5px;width:34px;text-align:center;font-size:7.7px;color:#575a5d;">11</div>
<div class="abs" style="left:0px;top:318.5px;width:34px;height:1px;background:#dcdcdc"></div>
<div class="t" style="left:0;top:322.5px;width:34px;text-align:center;font-size:7.7px;color:#575a5d;">12</div>
<div class="abs" style="left:0px;top:332.5px;width:34px;height:1px;background:#dcdcdc"></div>
<div class="t" style="left:0;top:336.5px;width:34px;text-align:center;font-size:7.7px;color:#575a5d;">13</div>
<div class="abs" style="left:0px;top:346.5px;width:34px;height:1px;background:#dcdcdc"></div>
<div class="t" style="left:0;top:350.5px;width:34px;text-align:center;font-size:7.7px;color:#575a5d;">14</div>
<div class="abs" style="left:0px;top:360.5px;width:34px;height:1px;background:#dcdcdc"></div>
<div class="t" style="left:0;top:364.5px;width:34px;text-align:center;font-size:7.7px;color:#575a5d;">15</div>
<div class="abs" style="left:0px;top:374.5px;width:34px;height:1px;background:#dcdcdc"></div>
<div class="t" style="left:0;top:378.5px;width:34px;text-align:center;font-size:7.7px;color:#575a5d;">16</div>
<div class="abs" style="left:0px;top:388.5px;width:34px;height:1px;background:#dcdcdc"></div>
<div class="t" style="left:0;top:392.5px;width:34px;text-align:center;font-size:7.7px;color:#575a5d;">17</div>
<div class="abs" style="left:0px;top:402.5px;width:34px;height:1px;background:#dcdcdc"></div>
<div class="t" style="left:0;top:406.5px;width:34px;text-align:center;font-size:7.7px;color:#575a5d;">18</div>
<div class="abs" style="left:0px;top:416.5px;width:34px;height:1px;background:#dcdcdc"></div>
<div class="t" style="left:0;top:420.5px;width:34px;text-align:center;font-size:7.7px;color:#575a5d;">19</div>
<div class="abs" style="left:0px;top:430.5px;width:34px;height:1px;background:#dcdcdc"></div>
<div class="t" style="left:0;top:434.5px;width:34px;text-align:center;font-size:7.7px;color:#575a5d;">20</div>
<div class="abs" style="left:0px;top:444.5px;width:34px;height:1px;background:#dcdcdc"></div>
<div class="t" style="left:0;top:448.5px;width:34px;text-align:center;font-size:7.7px;color:#575a5d;">21</div>
<div class="abs" style="left:0px;top:458.5px;width:34px;height:1px;background:#dcdcdc"></div>
<div class="t" style="left:0;top:462.5px;width:34px;text-align:center;font-size:7.7px;color:#575a5d;">22</div>
<div class="abs" style="left:0px;top:472.5px;width:34px;height:1px;background:#dcdcdc"></div>
<div class="t" style="left:0;top:476.5px;width:34px;text-align:center;font-size:7.7px;color:#575a5d;">23</div>
<div class="abs" style="left:0px;top:486.5px;width:34px;height:1px;background:#dcdcdc"></div>
<div class="t" style="left:0;top:490.5px;width:34px;text-align:center;font-size:7.7px;color:#575a5d;">24</div>
<div class="abs" style="left:0px;top:500.5px;width:34px;height:1px;background:#dcdcdc"></div>
<div class="t" style="left:0;top:504.5px;width:34px;text-align:center;font-size:7.7px;color:#575a5d;">25</div>
<div class="abs" style="left:0px;top:514.5px;width:34px;height:1px;background:#dcdcdc"></div>
<div class="t" style="left:0;top:518.5px;width:34px;text-align:center;font-size:7.7px;color:#575a5d;">26</div>
<div class="abs" style="left:0px;top:528.5px;width:34px;height:1px;background:#dcdcdc"></div>
<div class="t" style="left:0;top:532.5px;width:34px;text-align:center;font-size:7.7px;font-weight:bold;color:#0b1f44;">27</div>
<div class="abs" style="left:0px;top:542.5px;width:34px;height:1px;background:#dcdcdc"></div>
<div class="t" style="left:0;top:546.5px;width:34px;text-align:center;font-size:7.7px;color:#575a5d;">28</div>
<div class="abs" style="left:0px;top:556.5px;width:34px;height:1px;background:#dcdcdc"></div>
<div class="t" style="left:0;top:560.5px;width:34px;text-align:center;font-size:7.7px;color:#575a5d;">29</div>
<div class="abs" style="left:0px;top:570.5px;width:34px;height:1px;background:#dcdcdc"></div>
<div class="t" style="left:0;top:574.5px;width:34px;text-align:center;font-size:7.7px;color:#575a5d;">30</div>
<div class="abs" style="left:0px;top:584.5px;width:34px;height:1px;background:#dcdcdc"></div>
<div class="t" style="left:0;top:588.5px;width:34px;text-align:center;font-size:7.7px;color:#575a5d;">31</div>
<div class="abs" style="left:0px;top:598.5px;width:34px;height:1px;background:#dcdcdc"></div>
<div class="t" style="left:0;top:602.5px;width:34px;text-align:center;font-size:7.7px;color:#575a5d;">32</div>
<div class="abs" style="left:0px;top:612.5px;width:34px;height:1px;background:#dcdcdc"></div>
<div class="t" style="left:0;top:616.5px;width:34px;text-align:center;font-size:7.7px;color:#575a5d;">33</div>
<div class="abs" style="left:0px;top:626.5px;width:34px;height:1px;background:#dcdcdc"></div>
<div class="t" style="left:0;top:630.5px;width:34px;text-align:center;font-size:7.7px;color:#575a5d;">34</div>
<div class="abs" style="left:0px;top:640.5px;width:34px;height:1px;background:#dcdcdc"></div>
<div class="abs" style="left:0px;top:194px;width:34px;height:17px;background:#f8f9fa"></div>
<div class="abs" style="left:0px;top:208.6px;width:34.5px;height:2.6px;background:#c6c6c6"></div>
<div class="abs" style="left:32px;top:194px;width:2.6px;height:17px;background:#c6c6c6"></div>
<div class="abs" style="left:1229px;top:211px;width:9px;height:424px;background:#fff"></div>
<div class="abs" style="left:1229px;top:211px;width:1px;height:424px;background:#e4e4e4"></div>
<div class="abs" style="left:1231px;top:214px;width:6px;height:18px;border-radius:3px;background:#dadce0"></div>
<svg style="left:1231px;top:615px" width="6" height="4" viewBox="0 0 6 4"><path d="M0.5 4H5.5L3 0.5Z" fill="#b0b4b9"/></svg>
<svg style="left:1231px;top:628px" width="6" height="4" viewBox="0 0 6 4"><path d="M0.5 0H5.5L3 3.5Z" fill="#b0b4b9"/></svg>
<div class="abs" style="left:0px;top:635px;width:1238px;height:37px;background:#f9fbfd"></div>
<div class="abs" style="left:36px;top:635.5px;width:945px;height:7px;border-radius:0 4px 4px 0;background:#dadce0"></div>
<div class="abs" style="left:981px;top:635px;width:248px;height:9px;background:#fff"></div>
<svg style="left:1211px;top:636px" width="4" height="6" viewBox="0 0 4 6"><path d="M4 0.5V5.5L0.5 3Z" fill="#b0b4b9"/></svg>
<svg style="left:1224px;top:636px" width="4" height="6" viewBox="0 0 4 6"><path d="M0 0.5V5.5L3.5 3Z" fill="#b0b4b9"/></svg>
<svg style="left:41px;top:654px" width="10" height="10" viewBox="0 0 10 10"><path d="M0 5H10 M5 0V10" stroke="#444746" stroke-width="1.3"/></svg>
<svg style="left:70px;top:655px" width="11" height="8" viewBox="0 0 11 8"><path d="M0 0.8H11 M0 4H11 M0 7.2H11" stroke="#444746" stroke-width="1.3"/></svg>
<div class="abs" style="left:259px;top:645px;width:71px;height:27px;background:#e1e9f7"></div>
<div class="t" style="left:110px;top:654px;font-size:11px;letter-spacing:0.00px;color:#444746;transform:scaleX(0.932);transform-origin:0 50%">BAREMOS</div>
<svg style="left:170.5px;top:657.5px" width="6" height="4" viewBox="0 0 8 4"><path d="M0 0H8L4 4Z" fill="#444746"/></svg>
<div class="t" style="left:195px;top:654px;font-size:11px;letter-spacing:0.00px;color:#444746;transform:scaleX(0.932);transform-origin:0 50%">SALTOS</div>
<svg style="left:245px;top:657.5px" width="6" height="4" viewBox="0 0 8 4"><path d="M0 0H8L4 4Z" fill="#444746"/></svg>
<div class="t" style="left:268.5px;top:654px;font-size:11px;letter-spacing:0.05px;color:#1a4fb4;font-weight:bold;transform:scaleX(0.932);transform-origin:0 50%">BALÓN</div>
<svg style="left:314.5px;top:657.5px" width="6" height="4" viewBox="0 0 8 4"><path d="M0 0H8L4 4Z" fill="#1a4fb4"/></svg>
<div class="t" style="left:338px;top:654px;font-size:11px;letter-spacing:0.47px;color:#444746;transform:scaleX(0.932);transform-origin:0 50%">PLANCHA</div>
<svg style="left:397.5px;top:657.5px" width="6" height="4" viewBox="0 0 8 4"><path d="M0 0H8L4 4Z" fill="#444746"/></svg>
<div class="t" style="left:422.5px;top:654px;font-size:11px;letter-spacing:0.36px;color:#444746;transform:scaleX(0.932);transform-origin:0 50%">FLEXIBILIDAD</div>
<svg style="left:503.5px;top:657.5px" width="6" height="4" viewBox="0 0 8 4"><path d="M0 0H8L4 4Z" fill="#444746"/></svg>
<div class="t" style="left:527.5px;top:654px;font-size:11px;letter-spacing:0.39px;color:#444746;transform:scaleX(0.932);transform-origin:0 50%">VELOCIDAD</div>
<svg style="left:598.5px;top:657.5px" width="6" height="4" viewBox="0 0 8 4"><path d="M0 0H8L4 4Z" fill="#444746"/></svg>
</body></html>
